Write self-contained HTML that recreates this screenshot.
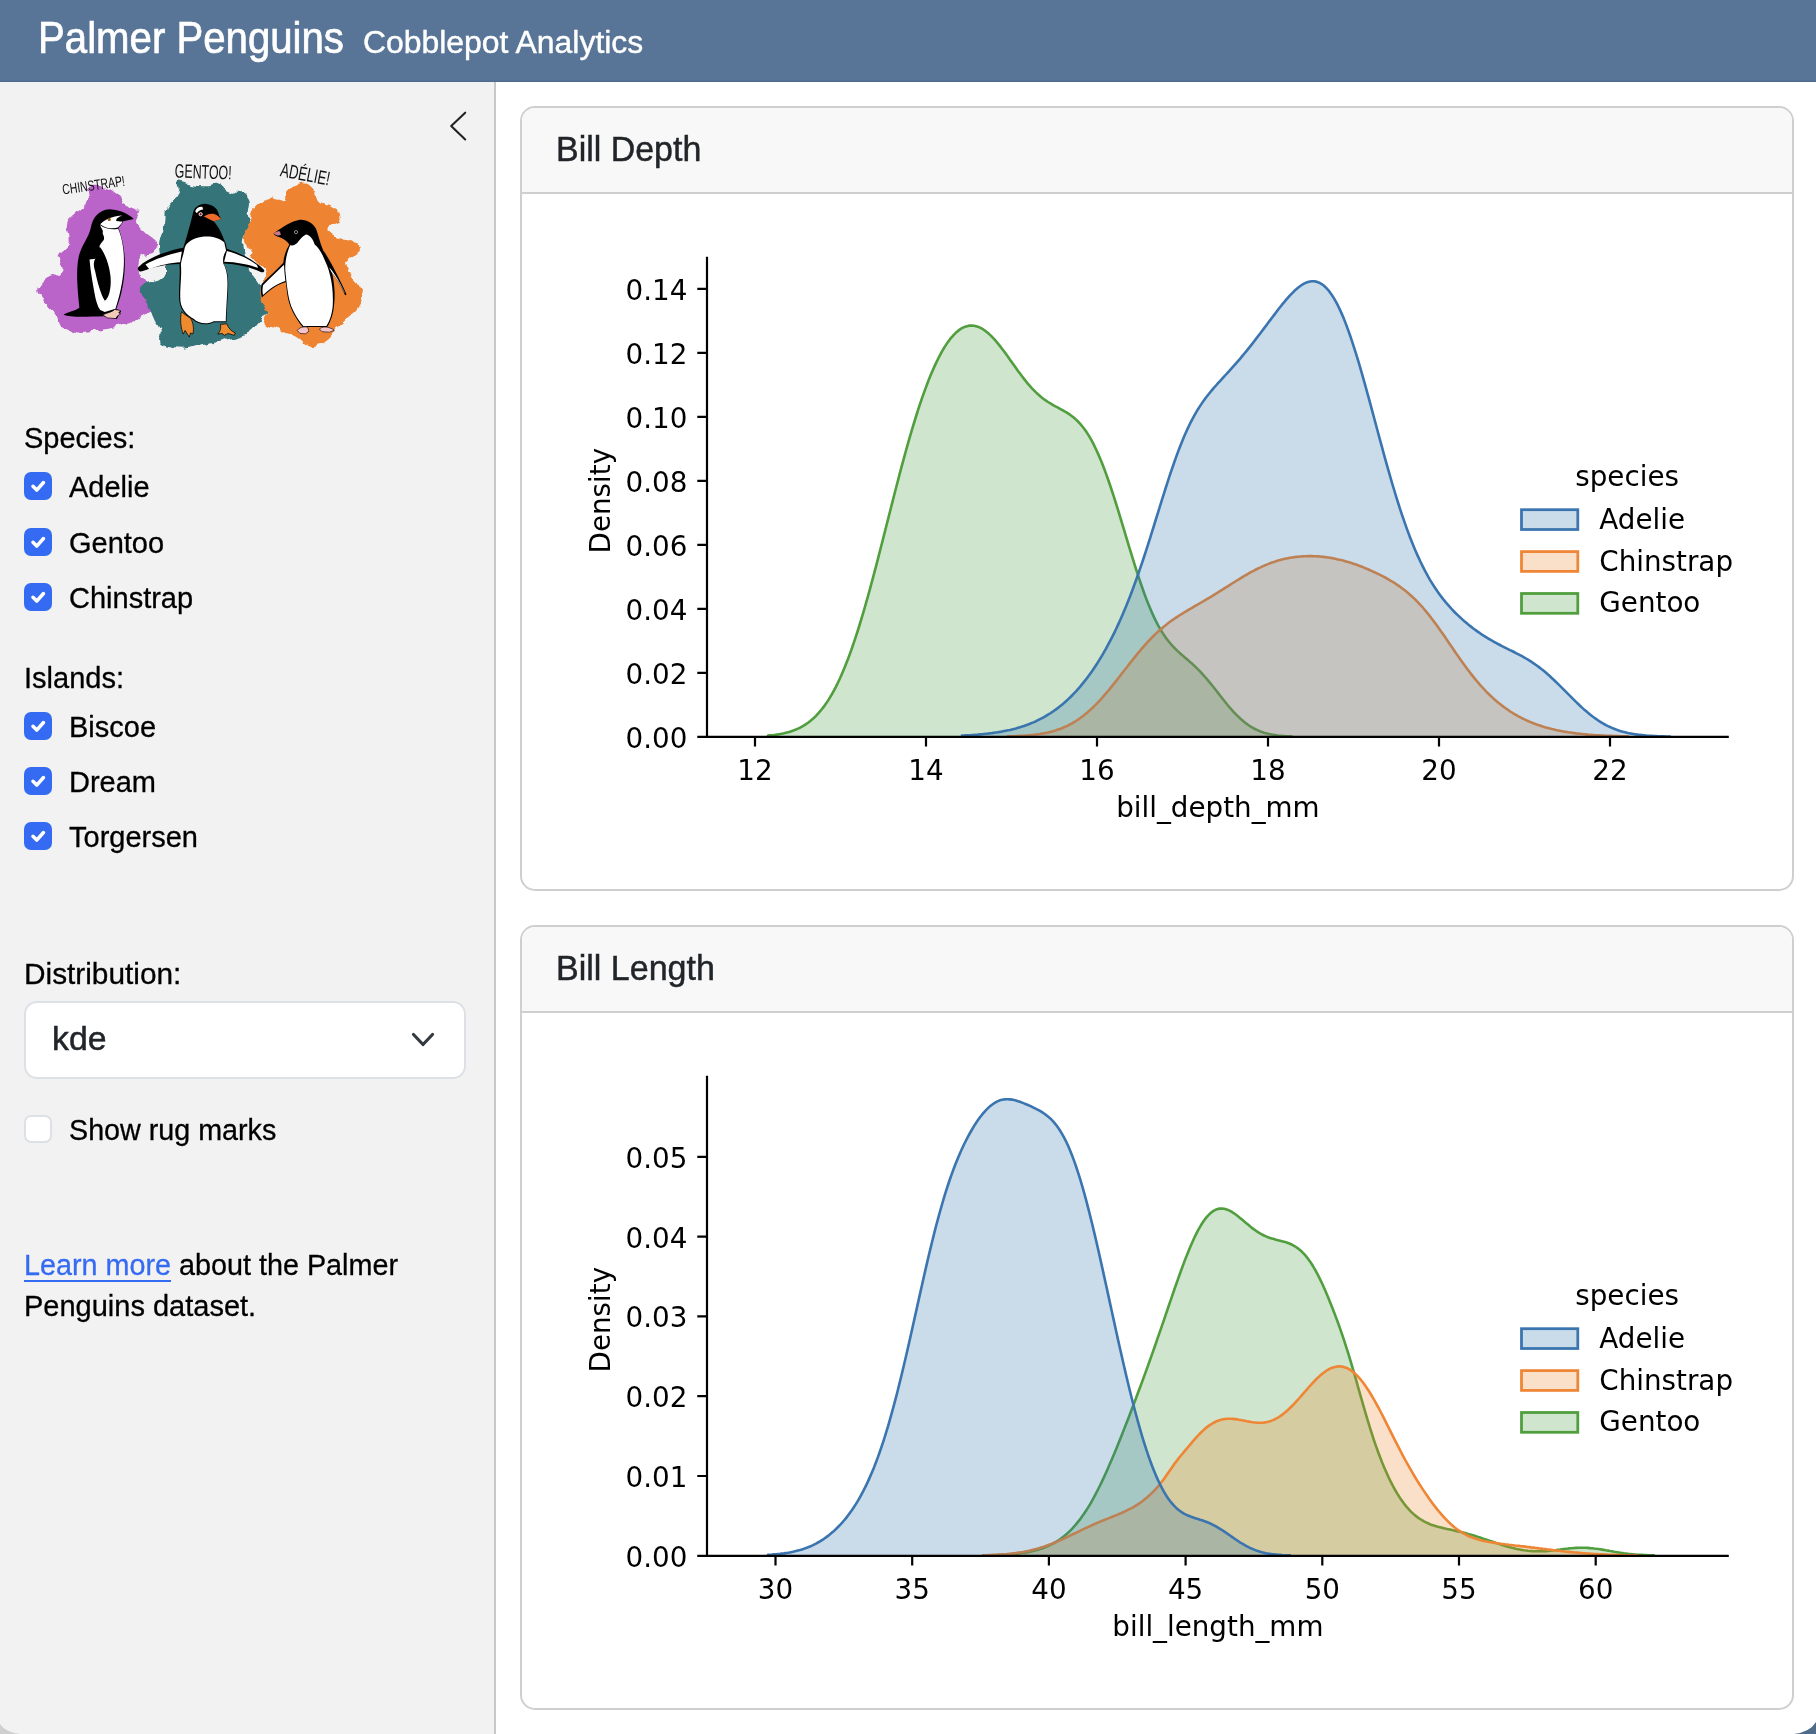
<!DOCTYPE html>
<html lang="en"><head><meta charset="utf-8"><title>Palmer Penguins</title>
<style>
html,body{margin:0;padding:0}
body{width:1816px;height:1734px;position:relative;overflow:hidden;background:#fff;font-family:"Liberation Sans",Arial,sans-serif}
.t{position:absolute;white-space:nowrap;-webkit-text-stroke:0.3px currentColor;transform:translateZ(0)}
header{position:absolute;left:0;top:0;width:1816px;height:82px;background:#587597;box-shadow:inset 0 -1.5px 0 #4f6b90}
aside{position:absolute;left:0;top:82px;width:494px;height:1652px;background:#f2f2f2;border-right:2px solid #c8c8c8}
.cb{position:absolute;left:24px;width:28px;height:28px;border-radius:7px;box-sizing:border-box;background:#fff;border:2px solid #dde1e6}
.cb.on{background:#356af2;border:none}
.cb svg{display:block}
.card{position:absolute;left:520px;width:1274px;height:785px;box-sizing:border-box;border:2px solid #cfcfcf;border-radius:15px;background:#fff;overflow:hidden}
.card .hd{height:84px;background:#f8f8f8;border-bottom:2px solid #cfcfcf}
.sel{position:absolute;left:24px;top:1001px;width:442px;height:78px;box-sizing:border-box;border:2px solid #dde1e6;border-radius:13px;background:#fff}
a{color:#356af2;text-decoration:underline;text-decoration-thickness:2px;text-underline-offset:5px}
svg{transform:translateZ(0)}
svg text{font-family:"DejaVu Sans",sans-serif;font-size:27.78px;fill:#000}
</style></head><body>

<header></header>
<div class="t " style="left:38px;top:11.3px;font-size:44.3px;line-height:53.16px;color:#fff;-webkit-text-stroke:0.7px #fff;transform:translateZ(0) scaleX(0.907);transform-origin:0 50%;">Palmer Penguins</div>
<div class="t " style="left:362.5px;top:23.8px;font-size:30.6px;line-height:36.72px;color:#fff;-webkit-text-stroke:0.4px #fff;transform:translateZ(0) scaleX(1.043);transform-origin:0 50%;">Cobblepot Analytics</div>
<aside></aside>
<svg style="position:absolute;left:440px;top:102px" width="40" height="48" viewBox="440 102 40 48"><path d="M465.2 112.7 L451.2 126 L465.2 139.4" fill="none" stroke="#222" stroke-width="2.1" stroke-linecap="round" stroke-linejoin="round"/></svg>
<svg style="position:absolute;left:20px;top:150px" width="380" height="210" viewBox="20 150 380 210">
<defs><filter id="rough" x="-10%" y="-10%" width="120%" height="120%"><feTurbulence type="fractalNoise" baseFrequency="0.09" numOctaves="2" seed="4" result="n"/><feDisplacementMap in="SourceGraphic" in2="n" scale="9" xChannelSelector="R" yChannelSelector="G"/></filter></defs>
<g filter="url(#rough)">
<path d="M87.8,188.8 C90.7,186.5 99.9,186.5 104.8,187.5 C109.6,188.6 112.9,191.8 116.9,194.8 C120.9,197.8 125.4,202.7 129.0,205.7 C132.6,208.7 137.5,210.2 138.7,213.0 C139.9,215.8 134.9,219.0 136.3,222.7 C137.7,226.3 143.7,231.6 147.2,234.8 C150.6,238.0 155.9,239.2 156.9,242.1 C157.9,244.9 155.9,249.3 153.2,251.7 C150.6,254.2 143.5,253.4 141.1,256.6 C138.7,259.8 137.7,266.3 138.7,271.1 C139.7,276.0 144.4,279.8 147.2,285.7 C150.0,291.5 155.7,301.6 155.7,306.2 C155.7,310.9 151.6,310.7 147.2,313.5 C142.7,316.3 136.1,320.6 129.0,323.2 C121.9,325.8 112.9,327.6 104.8,329.3 C96.7,330.9 87.8,333.5 80.6,332.9 C73.3,332.3 65.0,328.7 61.2,325.6 C57.3,322.6 60.4,319.0 57.5,314.7 C54.7,310.5 47.5,304.4 44.2,300.2 C41.0,296.0 37.8,292.9 38.2,289.3 C38.6,285.7 42.8,281.4 46.6,278.4 C50.5,275.4 59.2,274.8 61.2,271.1 C63.2,267.5 57.5,261.0 58.8,256.6 C60.0,252.1 67.0,250.1 68.4,244.5 C69.9,238.8 65.6,228.3 67.2,222.7 C68.9,217.0 74.7,214.2 78.1,210.6 C81.6,206.9 86.2,204.5 87.8,200.9 C89.4,197.2 85.0,191.0 87.8,188.8 Z" fill="#ba64c9"/>
<path d="M178.4,181.5 C180.9,180.7 188.1,184.3 193.0,185.1 C197.8,185.9 203.5,186.5 207.5,186.3 C211.6,186.1 214.0,183.3 217.2,183.9 C220.4,184.5 223.9,188.6 226.9,190.0 C229.9,191.4 232.3,191.8 235.4,192.4 C238.4,193.0 242.6,192.2 245.1,193.6 C247.5,195.0 249.3,197.6 249.9,200.9 C250.5,204.1 248.7,208.5 248.7,213.0 C248.7,217.4 250.7,223.5 249.9,227.5 C249.1,231.6 245.1,234.0 243.9,237.2 C242.6,240.4 242.2,243.3 242.6,246.9 C243.0,250.5 244.9,254.8 246.3,259.0 C247.7,263.3 249.1,268.3 251.1,272.3 C253.1,276.4 256.0,279.4 258.4,283.2 C260.8,287.1 264.0,291.3 265.7,295.3 C267.3,299.4 268.7,303.4 268.1,307.5 C267.5,311.5 264.9,315.5 262.0,319.6 C259.2,323.6 255.4,328.9 251.1,331.7 C246.9,334.5 242.6,334.7 236.6,336.5 C230.5,338.3 221.4,341.0 214.8,342.6 C208.1,344.2 202.7,345.2 196.6,346.2 C190.6,347.2 184.3,349.0 178.4,348.6 C172.6,348.2 164.5,346.6 161.5,343.8 C158.5,341.0 161.5,335.7 160.3,331.7 C159.1,327.6 156.2,324.0 154.2,319.6 C152.2,315.1 150.4,309.9 148.2,305.0 C145.9,300.2 141.3,294.1 140.9,290.5 C140.5,286.9 142.7,285.3 145.7,283.2 C148.8,281.2 155.6,280.4 159.1,278.4 C162.5,276.4 165.9,274.4 166.3,271.1 C166.7,267.9 162.7,263.0 161.5,259.0 C160.3,255.0 159.3,250.5 159.1,246.9 C158.9,243.3 159.3,241.2 160.3,237.2 C161.3,233.2 164.1,227.5 165.1,222.7 C166.1,217.8 164.9,212.2 166.3,208.1 C167.8,204.1 171.6,201.5 173.6,198.4 C175.6,195.4 177.6,192.8 178.4,190.0 C179.3,187.1 176.0,182.3 178.4,181.5 Z" fill="#36757a"/>
<path d="M297.8,185.1 C301.1,183.9 304.7,182.9 307.5,183.9 C310.3,184.9 312.8,188.2 314.8,191.2 C316.8,194.2 317.2,199.5 319.6,202.1 C322.1,204.7 326.3,205.5 329.3,206.9 C332.3,208.3 336.2,208.3 337.8,210.6 C339.4,212.8 340.2,217.2 339.0,220.3 C337.8,223.3 331.1,225.9 330.5,228.7 C329.9,231.6 331.9,235.4 335.4,237.2 C338.8,239.0 347.3,238.0 351.1,239.6 C355.0,241.2 357.4,244.5 358.4,246.9 C359.4,249.3 359.2,251.7 357.2,254.2 C355.2,256.6 347.3,257.8 346.3,261.4 C345.3,265.1 348.9,271.3 351.1,276.0 C353.3,280.6 357.8,285.5 359.6,289.3 C361.4,293.1 362.6,295.3 362.0,299.0 C361.4,302.6 358.6,307.7 356.0,311.1 C353.3,314.5 349.5,316.7 346.3,319.6 C343.0,322.4 339.8,324.8 336.6,328.1 C333.4,331.3 330.5,335.9 326.9,339.0 C323.3,342.0 318.4,345.4 314.8,346.2 C311.2,347.0 308.3,345.4 305.1,343.8 C301.9,342.2 299.0,338.5 295.4,336.5 C291.8,334.5 287.5,333.3 283.3,331.7 C279.1,330.1 273.2,328.5 270.0,326.8 C266.7,325.2 264.5,324.6 263.9,322.0 C263.3,319.4 266.7,315.1 266.3,311.1 C265.9,307.1 262.1,302.4 261.5,297.8 C260.9,293.1 262.1,287.7 262.7,283.2 C263.3,278.8 266.5,275.2 265.1,271.1 C263.7,267.1 257.3,263.0 254.2,259.0 C251.2,255.0 248.6,250.9 247.0,246.9 C245.3,242.9 243.9,238.8 244.5,234.8 C245.1,230.7 249.2,226.7 250.6,222.7 C252.0,218.6 251.2,214.0 253.0,210.6 C254.8,207.1 258.3,204.1 261.5,202.1 C264.7,200.1 268.8,198.7 272.4,198.4 C276.0,198.2 280.7,202.1 283.3,200.9 C285.9,199.7 285.7,193.8 288.1,191.2 C290.6,188.6 294.6,186.3 297.8,185.1 Z" fill="#ee8433"/>
</g>
<g transform="translate(20,150) scale(0.12112)" stroke-linejoin="round">
<path d="M940 570 C900 535 840 495 740 490 C650 495 600 560 585 640 C570 720 510 780 485 880 C460 1000 475 1150 490 1300 C450 1335 390 1335 360 1360 C420 1385 560 1375 690 1372 L800 1395 L835 1330 L795 1312 C840 1200 870 1050 865 900 C860 780 830 690 812 645 C835 620 850 600 852 588 Z" fill="#000"/>
<path d="M845 540 C780 540 700 570 662 612 C700 645 770 655 808 640 C828 620 842 602 848 592 L795 586 C790 566 815 550 845 540 Z" fill="#fff"/>
<path d="M662 622 C700 652 770 662 810 650 C848 735 863 850 857 960 C850 1100 815 1230 788 1310 L700 1338 L662 1322 C640 1290 625 1240 615 1180 C600 1100 582 1000 574 905 C590 900 620 900 645 895 C690 870 660 830 658 805 C650 785 690 750 692 742 C702 722 682 692 682 688 C694 662 664 640 662 622 Z" fill="#fff"/>
<path d="M660 800 C700 850 740 950 748 1050 C755 1150 730 1230 700 1245 C670 1200 640 1100 620 1000 C600 940 610 900 640 880 C650 850 650 820 660 800 Z" fill="#000"/>
<circle cx="737" cy="573" r="13" fill="#8a5a14"/>
<path d="M682 1362 C720 1342 760 1340 782 1316 L830 1326 L815 1346 L832 1352 L802 1372 L792 1392 L722 1386 Z" fill="#f3cbb9" stroke="#000" stroke-width="5"/>
</g>
<g transform="translate(230,150) scale(0.12112)" stroke-linejoin="round">
<path d="M360 690 C400 660 480 600 560 580 C620 565 680 600 710 650 C730 700 740 760 770 830 C820 900 900 1050 962 1192 L950 1200 C920 1130 880 1060 842 1012 C862 1100 872 1200 857 1300 C847 1380 822 1432 802 1462 L600 1462 C550 1400 500 1320 480 1230 C470 1180 465 1130 462 1092 C400 1102 320 1162 263 1218 C253 1180 253 1140 260 1108 C320 1050 390 980 440 930 C445 880 460 830 490 780 C470 750 440 730 410 720 C385 715 365 705 360 690 Z" fill="#000"/>
<path d="M560 762 C580 732 610 702 632 697 C660 702 690 742 700 782 C730 802 760 852 788 922 C828 1002 858 1150 848 1290 C840 1370 816 1425 796 1453 L605 1453 C557 1396 507 1316 488 1230 C472 1150 462 1050 457 1000 C452 920 472 842 497 787 C522 792 545 782 560 762 Z" fill="#fff"/>
<path d="M446 948 C396 998 326 1062 273 1117 C267 1147 267 1175 273 1198 C320 1150 400 1096 457 1081 C451 1036 448 992 446 948 Z" fill="#fff"/>
<path d="M818 968 C852 1003 902 1082 944 1170 L948 1184 C915 1115 875 1050 836 1006 Z" fill="#fff"/>
<circle cx="545" cy="678" r="13" fill="#000" stroke="#ddd" stroke-width="5"/>
<path d="M362 690 C372 676 392 668 412 672 L420 700 C400 712 378 706 362 690 Z" fill="#c9788a"/>
<path d="M555 1490 C570 1466 600 1456 640 1462 L652 1496 L622 1518 L578 1514 Z" fill="#f7c3c8" stroke="#000" stroke-width="5"/>
<path d="M738 1478 C760 1458 800 1456 842 1476 L862 1488 L822 1504 L760 1500 Z" fill="#f7c3c8" stroke="#000" stroke-width="5"/>
</g>
<g transform="translate(130,150) scale(0.12112)" stroke-linejoin="round">
<path d="M520 520 C530 470 580 440 630 445 C690 450 730 490 735 540 L755 570 L690 588 C740 640 760 700 790 770 L800 815 C900 850 1020 900 1108 990 C1113 1007 1097 1012 1080 1007 C980 962 880 942 772 937 C812 1000 817 1100 807 1200 C802 1300 797 1380 797 1422 L690 1422 C640 1452 560 1442 520 1402 C470 1372 418 1330 408 1250 C398 1150 418 1050 408 942 C300 942 180 972 100 1002 C73 1007 58 990 68 968 C160 880 330 828 440 808 C460 740 490 650 520 520 Z" fill="#000"/>
<path d="M472 772 C540 702 700 692 778 762 L793 830 C770 870 765 900 770 937 C808 1000 810 1100 801 1200 C796 1300 791 1380 791 1413 L690 1413 C640 1443 562 1433 525 1394 C477 1364 427 1326 417 1250 C407 1150 430 1050 420 942 C427 900 442 860 447 830 C452 800 462 782 472 772 Z" fill="#fff"/>
<path d="M428 838 C320 862 200 902 128 946 C140 960 150 974 160 984 C240 950 340 930 414 926 Z" fill="#fff"/>
<path d="M800 834 C900 862 990 902 1048 950 L1058 974 C980 945 880 926 777 923 Z" fill="#fff"/>
<path d="M610 550 C640 525 690 515 720 540 L755 570 L690 588 C660 575 630 560 610 550 Z" fill="#ef6a2a"/>
<path d="M538 505 C548 478 575 466 598 470 L604 492 C585 494 566 502 552 522 Z" fill="#fff"/>
<circle cx="583" cy="530" r="13" fill="#b22" stroke="#fff" stroke-width="7"/><circle cx="583" cy="530" r="5" fill="#311"/>
<path d="M425 1335 C410 1400 420 1470 440 1520 L455 1490 L490 1545 L500 1510 L520 1520 C530 1470 520 1420 500 1390 C470 1370 440 1350 425 1335 Z" fill="#f08a2e" stroke="#000" stroke-width="6"/>
<path d="M745 1440 L800 1435 C810 1470 840 1500 870 1510 L860 1530 L810 1515 L780 1530 L760 1515 L725 1520 C745 1495 755 1470 745 1440 Z" fill="#f08a2e" stroke="#000" stroke-width="6"/>
</g>
<text transform="translate(63,194.5) rotate(-8)" textLength="63" lengthAdjust="spacingAndGlyphs" style="font-family:&quot;Liberation Sans&quot;,sans-serif;fill:#111;font-size:14.5px">CHINSTRAP!</text>
<text transform="translate(174.5,177.5) rotate(2)" textLength="57" lengthAdjust="spacingAndGlyphs" style="font-family:&quot;Liberation Sans&quot;,sans-serif;fill:#111;font-size:19.5px">GENTOO!</text>
<text transform="translate(279.5,176) rotate(11)" textLength="50" lengthAdjust="spacingAndGlyphs" style="font-family:&quot;Liberation Sans&quot;,sans-serif;fill:#111;font-size:19.5px">ADÉLIE!</text>
</svg>
<div class="t " style="left:24px;top:421.0px;font-size:29px;line-height:34.8px;color:#000;">Species:</div>
<div class="cb on" style="top:472px"><svg viewBox="0 0 20 20" width="28" height="28"><path d="M6.4 10.2l2.7 2.7 4.8-5.4" fill="none" stroke="#fff" stroke-width="2.5" stroke-linecap="round" stroke-linejoin="round"/></svg></div><div class="t " style="left:69px;top:470.2px;font-size:29px;line-height:34.8px;color:#000;">Adelie</div>
<div class="cb on" style="top:528px"><svg viewBox="0 0 20 20" width="28" height="28"><path d="M6.4 10.2l2.7 2.7 4.8-5.4" fill="none" stroke="#fff" stroke-width="2.5" stroke-linecap="round" stroke-linejoin="round"/></svg></div><div class="t " style="left:69px;top:526.2px;font-size:29px;line-height:34.8px;color:#000;">Gentoo</div>
<div class="cb on" style="top:583px"><svg viewBox="0 0 20 20" width="28" height="28"><path d="M6.4 10.2l2.7 2.7 4.8-5.4" fill="none" stroke="#fff" stroke-width="2.5" stroke-linecap="round" stroke-linejoin="round"/></svg></div><div class="t " style="left:69px;top:581.2px;font-size:29px;line-height:34.8px;color:#000;">Chinstrap</div>
<div class="t " style="left:24px;top:660.5px;font-size:29px;line-height:34.8px;color:#000;">Islands:</div>
<div class="cb on" style="top:712px"><svg viewBox="0 0 20 20" width="28" height="28"><path d="M6.4 10.2l2.7 2.7 4.8-5.4" fill="none" stroke="#fff" stroke-width="2.5" stroke-linecap="round" stroke-linejoin="round"/></svg></div><div class="t " style="left:69px;top:710.2px;font-size:29px;line-height:34.8px;color:#000;">Biscoe</div>
<div class="cb on" style="top:767px"><svg viewBox="0 0 20 20" width="28" height="28"><path d="M6.4 10.2l2.7 2.7 4.8-5.4" fill="none" stroke="#fff" stroke-width="2.5" stroke-linecap="round" stroke-linejoin="round"/></svg></div><div class="t " style="left:69px;top:765.2px;font-size:29px;line-height:34.8px;color:#000;">Dream</div>
<div class="cb on" style="top:822px"><svg viewBox="0 0 20 20" width="28" height="28"><path d="M6.4 10.2l2.7 2.7 4.8-5.4" fill="none" stroke="#fff" stroke-width="2.5" stroke-linecap="round" stroke-linejoin="round"/></svg></div><div class="t " style="left:69px;top:820.2px;font-size:29px;line-height:34.8px;color:#000;">Torgersen</div>
<div class="t " style="left:24px;top:955.5px;font-size:29.8px;line-height:35.76px;color:#000;">Distribution:</div>
<div class="sel"></div>
<div class="t " style="left:52px;top:1018.1px;font-size:33.8px;line-height:40.56px;color:#212529;-webkit-text-stroke:0.5px #212529;">kde</div>
<svg style="position:absolute;left:406px;top:1026px" width="34" height="28" viewBox="406 1026 34 28"><path d="M413.5 1034.5 L423 1044.5 L432.5 1034.5" fill="none" stroke="#343a40" stroke-width="3.2" stroke-linecap="round" stroke-linejoin="round"/></svg>
<div class="cb" style="top:1115px"></div>
<div class="t " style="left:69px;top:1112.9px;font-size:28.7px;line-height:34.44px;color:#000;">Show rug marks</div>
<div class="t " style="left:24px;top:1248.0px;font-size:28.75px;line-height:34.5px;color:#000;"><a>Learn more</a> about the Palmer</div>
<div class="t " style="left:24px;top:1289.4px;font-size:29px;line-height:34.8px;color:#000;">Penguins dataset.</div>
<div class="card" style="top:106px"><div class="hd"></div></div>
<div class="card" style="top:925px"><div class="hd"></div></div>
<div class="t " style="left:555.5px;top:128.5px;font-size:34.2px;line-height:41.04px;color:#212529;-webkit-text-stroke:0.45px #212529;transform:translateZ(0) scaleX(0.993);transform-origin:0 50%;">Bill Depth</div>
<div class="t " style="left:555.5px;top:947.5px;font-size:34.2px;line-height:41.04px;color:#212529;-webkit-text-stroke:0.45px #212529;transform:translateZ(0) scaleX(0.995);transform-origin:0 50%;">Bill Length</div>
<svg style="position:absolute;left:523px;top:195px" width="1268" height="692" viewBox="523 195 1268 692"><path d="M768.0,736.8 L768.0,735.6 770.0,735.4 772.0,735.2 774.0,735.0 776.0,734.7 778.0,734.4 780.0,734.1 782.0,733.7 784.0,733.3 786.0,732.8 788.0,732.3 790.0,731.7 792.0,731.0 794.0,730.3 796.0,729.5 798.0,728.6 800.0,727.7 802.0,726.6 804.0,725.4 806.0,724.1 808.0,722.7 810.0,721.2 812.0,719.6 814.0,717.8 816.0,715.8 818.0,713.7 820.0,711.4 822.0,709.0 824.0,706.4 826.0,703.6 828.0,700.6 830.0,697.4 832.0,694.0 834.0,690.4 836.0,686.6 838.0,682.5 840.0,678.3 842.0,673.8 844.0,669.1 846.0,664.1 848.0,659.0 850.0,653.6 852.0,648.0 854.0,642.2 856.0,636.2 858.0,630.0 860.0,623.5 862.0,616.9 864.0,610.1 866.0,603.2 868.0,596.1 870.0,588.8 872.0,581.4 874.0,573.9 876.0,566.3 878.0,558.6 880.0,550.8 882.0,543.0 884.0,535.1 886.0,527.3 888.0,519.4 890.0,511.5 892.0,503.6 894.0,495.8 896.0,488.0 898.0,480.3 900.0,472.7 902.0,465.2 904.0,457.8 906.0,450.5 908.0,443.4 910.0,436.4 912.0,429.6 914.0,423.0 916.0,416.5 918.0,410.2 920.0,404.1 922.0,398.2 924.0,392.6 926.0,387.1 928.0,381.8 930.0,376.8 932.0,372.0 934.0,367.4 936.0,363.1 938.0,359.0 940.0,355.1 942.0,351.4 944.0,348.0 946.0,344.9 948.0,341.9 950.0,339.2 952.0,336.8 954.0,334.6 956.0,332.6 958.0,330.9 960.0,329.4 962.0,328.2 964.0,327.2 966.0,326.4 968.0,325.9 970.0,325.6 972.0,325.6 974.0,325.8 976.0,326.2 978.0,326.8 980.0,327.6 982.0,328.7 984.0,330.0 986.0,331.4 988.0,333.0 990.0,334.9 992.0,336.8 994.0,338.9 996.0,341.2 998.0,343.6 1000.0,346.1 1002.0,348.7 1004.0,351.3 1006.0,354.1 1008.0,356.8 1010.0,359.7 1012.0,362.5 1014.0,365.3 1016.0,368.1 1018.0,370.9 1020.0,373.6 1022.0,376.3 1024.0,378.9 1026.0,381.4 1028.0,383.8 1030.0,386.1 1032.0,388.3 1034.0,390.4 1036.0,392.4 1038.0,394.3 1040.0,396.0 1042.0,397.7 1044.0,399.2 1046.0,400.6 1048.0,402.0 1050.0,403.2 1052.0,404.4 1054.0,405.6 1056.0,406.7 1058.0,407.7 1060.0,408.8 1062.0,409.9 1064.0,411.0 1066.0,412.2 1068.0,413.4 1070.0,414.7 1072.0,416.2 1074.0,417.8 1076.0,419.6 1078.0,421.5 1080.0,423.6 1082.0,426.0 1084.0,428.5 1086.0,431.3 1088.0,434.4 1090.0,437.7 1092.0,441.2 1094.0,445.1 1096.0,449.2 1098.0,453.6 1100.0,458.2 1102.0,463.1 1104.0,468.2 1106.0,473.6 1108.0,479.2 1110.0,485.0 1112.0,491.0 1114.0,497.2 1116.0,503.5 1118.0,509.9 1120.0,516.5 1122.0,523.1 1124.0,529.7 1126.0,536.4 1128.0,543.1 1130.0,549.7 1132.0,556.2 1134.0,562.7 1136.0,569.0 1138.0,575.2 1140.0,581.2 1142.0,587.0 1144.0,592.7 1146.0,598.1 1148.0,603.2 1150.0,608.1 1152.0,612.7 1154.0,617.1 1156.0,621.2 1158.0,625.1 1160.0,628.6 1162.0,632.0 1164.0,635.1 1166.0,637.9 1168.0,640.6 1170.0,643.0 1172.0,645.3 1174.0,647.5 1176.0,649.5 1178.0,651.4 1180.0,653.2 1182.0,654.9 1184.0,656.7 1186.0,658.4 1188.0,660.1 1190.0,661.9 1192.0,663.6 1194.0,665.5 1196.0,667.4 1198.0,669.4 1200.0,671.4 1202.0,673.5 1204.0,675.8 1206.0,678.0 1208.0,680.4 1210.0,682.8 1212.0,685.3 1214.0,687.8 1216.0,690.3 1218.0,692.9 1220.0,695.5 1222.0,698.0 1224.0,700.5 1226.0,703.0 1228.0,705.5 1230.0,707.8 1232.0,710.1 1234.0,712.3 1236.0,714.4 1238.0,716.4 1240.0,718.3 1242.0,720.1 1244.0,721.8 1246.0,723.4 1248.0,724.8 1250.0,726.2 1252.0,727.4 1254.0,728.5 1256.0,729.5 1258.0,730.4 1260.0,731.3 1262.0,732.0 1264.0,732.7 1266.0,733.2 1268.0,733.8 1270.0,734.2 1272.0,734.6 1274.0,734.9 1276.0,735.2 1278.0,735.5 1280.0,735.7 1282.0,735.9 1284.0,736.0 1286.0,736.2 1288.0,736.3 1290.0,736.4 1292.0,736.5 L1292.0,736.8 Z" fill="#3f9737" fill-opacity="0.25" stroke="none"/><path d="M768.0,736.8 L768.0,735.6 770.0,735.4 772.0,735.2 774.0,735.0 776.0,734.7 778.0,734.4 780.0,734.1 782.0,733.7 784.0,733.3 786.0,732.8 788.0,732.3 790.0,731.7 792.0,731.0 794.0,730.3 796.0,729.5 798.0,728.6 800.0,727.7 802.0,726.6 804.0,725.4 806.0,724.1 808.0,722.7 810.0,721.2 812.0,719.6 814.0,717.8 816.0,715.8 818.0,713.7 820.0,711.4 822.0,709.0 824.0,706.4 826.0,703.6 828.0,700.6 830.0,697.4 832.0,694.0 834.0,690.4 836.0,686.6 838.0,682.5 840.0,678.3 842.0,673.8 844.0,669.1 846.0,664.1 848.0,659.0 850.0,653.6 852.0,648.0 854.0,642.2 856.0,636.2 858.0,630.0 860.0,623.5 862.0,616.9 864.0,610.1 866.0,603.2 868.0,596.1 870.0,588.8 872.0,581.4 874.0,573.9 876.0,566.3 878.0,558.6 880.0,550.8 882.0,543.0 884.0,535.1 886.0,527.3 888.0,519.4 890.0,511.5 892.0,503.6 894.0,495.8 896.0,488.0 898.0,480.3 900.0,472.7 902.0,465.2 904.0,457.8 906.0,450.5 908.0,443.4 910.0,436.4 912.0,429.6 914.0,423.0 916.0,416.5 918.0,410.2 920.0,404.1 922.0,398.2 924.0,392.6 926.0,387.1 928.0,381.8 930.0,376.8 932.0,372.0 934.0,367.4 936.0,363.1 938.0,359.0 940.0,355.1 942.0,351.4 944.0,348.0 946.0,344.9 948.0,341.9 950.0,339.2 952.0,336.8 954.0,334.6 956.0,332.6 958.0,330.9 960.0,329.4 962.0,328.2 964.0,327.2 966.0,326.4 968.0,325.9 970.0,325.6 972.0,325.6 974.0,325.8 976.0,326.2 978.0,326.8 980.0,327.6 982.0,328.7 984.0,330.0 986.0,331.4 988.0,333.0 990.0,334.9 992.0,336.8 994.0,338.9 996.0,341.2 998.0,343.6 1000.0,346.1 1002.0,348.7 1004.0,351.3 1006.0,354.1 1008.0,356.8 1010.0,359.7 1012.0,362.5 1014.0,365.3 1016.0,368.1 1018.0,370.9 1020.0,373.6 1022.0,376.3 1024.0,378.9 1026.0,381.4 1028.0,383.8 1030.0,386.1 1032.0,388.3 1034.0,390.4 1036.0,392.4 1038.0,394.3 1040.0,396.0 1042.0,397.7 1044.0,399.2 1046.0,400.6 1048.0,402.0 1050.0,403.2 1052.0,404.4 1054.0,405.6 1056.0,406.7 1058.0,407.7 1060.0,408.8 1062.0,409.9 1064.0,411.0 1066.0,412.2 1068.0,413.4 1070.0,414.7 1072.0,416.2 1074.0,417.8 1076.0,419.6 1078.0,421.5 1080.0,423.6 1082.0,426.0 1084.0,428.5 1086.0,431.3 1088.0,434.4 1090.0,437.7 1092.0,441.2 1094.0,445.1 1096.0,449.2 1098.0,453.6 1100.0,458.2 1102.0,463.1 1104.0,468.2 1106.0,473.6 1108.0,479.2 1110.0,485.0 1112.0,491.0 1114.0,497.2 1116.0,503.5 1118.0,509.9 1120.0,516.5 1122.0,523.1 1124.0,529.7 1126.0,536.4 1128.0,543.1 1130.0,549.7 1132.0,556.2 1134.0,562.7 1136.0,569.0 1138.0,575.2 1140.0,581.2 1142.0,587.0 1144.0,592.7 1146.0,598.1 1148.0,603.2 1150.0,608.1 1152.0,612.7 1154.0,617.1 1156.0,621.2 1158.0,625.1 1160.0,628.6 1162.0,632.0 1164.0,635.1 1166.0,637.9 1168.0,640.6 1170.0,643.0 1172.0,645.3 1174.0,647.5 1176.0,649.5 1178.0,651.4 1180.0,653.2 1182.0,654.9 1184.0,656.7 1186.0,658.4 1188.0,660.1 1190.0,661.9 1192.0,663.6 1194.0,665.5 1196.0,667.4 1198.0,669.4 1200.0,671.4 1202.0,673.5 1204.0,675.8 1206.0,678.0 1208.0,680.4 1210.0,682.8 1212.0,685.3 1214.0,687.8 1216.0,690.3 1218.0,692.9 1220.0,695.5 1222.0,698.0 1224.0,700.5 1226.0,703.0 1228.0,705.5 1230.0,707.8 1232.0,710.1 1234.0,712.3 1236.0,714.4 1238.0,716.4 1240.0,718.3 1242.0,720.1 1244.0,721.8 1246.0,723.4 1248.0,724.8 1250.0,726.2 1252.0,727.4 1254.0,728.5 1256.0,729.5 1258.0,730.4 1260.0,731.3 1262.0,732.0 1264.0,732.7 1266.0,733.2 1268.0,733.8 1270.0,734.2 1272.0,734.6 1274.0,734.9 1276.0,735.2 1278.0,735.5 1280.0,735.7 1282.0,735.9 1284.0,736.0 1286.0,736.2 1288.0,736.3 1290.0,736.4 1292.0,736.5 L1292.0,736.8" fill="none" stroke="#519e3e" stroke-width="2.6" stroke-linejoin="round"/>
<path d="M1008.0,736.8 L1008.0,736.4 1010.0,736.3 1012.0,736.3 1014.0,736.2 1016.0,736.1 1018.0,736.0 1020.0,735.9 1022.0,735.8 1024.0,735.7 1026.0,735.5 1028.0,735.4 1030.0,735.2 1032.0,735.0 1034.0,734.8 1036.0,734.5 1038.0,734.3 1040.0,734.0 1042.0,733.6 1044.0,733.3 1046.0,732.9 1048.0,732.5 1050.0,732.0 1052.0,731.5 1054.0,730.9 1056.0,730.3 1058.0,729.6 1060.0,728.9 1062.0,728.2 1064.0,727.3 1066.0,726.4 1068.0,725.5 1070.0,724.4 1072.0,723.4 1074.0,722.2 1076.0,721.0 1078.0,719.6 1080.0,718.2 1082.0,716.8 1084.0,715.2 1086.0,713.6 1088.0,711.9 1090.0,710.1 1092.0,708.3 1094.0,706.4 1096.0,704.4 1098.0,702.3 1100.0,700.2 1102.0,698.0 1104.0,695.7 1106.0,693.4 1108.0,691.0 1110.0,688.6 1112.0,686.1 1114.0,683.6 1116.0,681.1 1118.0,678.5 1120.0,676.0 1122.0,673.4 1124.0,670.8 1126.0,668.2 1128.0,665.7 1130.0,663.1 1132.0,660.6 1134.0,658.1 1136.0,655.6 1138.0,653.1 1140.0,650.8 1142.0,648.4 1144.0,646.1 1146.0,643.9 1148.0,641.7 1150.0,639.6 1152.0,637.5 1154.0,635.5 1156.0,633.6 1158.0,631.7 1160.0,629.9 1162.0,628.2 1164.0,626.5 1166.0,624.9 1168.0,623.3 1170.0,621.8 1172.0,620.4 1174.0,619.0 1176.0,617.6 1178.0,616.3 1180.0,615.0 1182.0,613.8 1184.0,612.5 1186.0,611.3 1188.0,610.1 1190.0,609.0 1192.0,607.8 1194.0,606.6 1196.0,605.5 1198.0,604.3 1200.0,603.2 1202.0,602.0 1204.0,600.8 1206.0,599.6 1208.0,598.5 1210.0,597.3 1212.0,596.1 1214.0,594.8 1216.0,593.6 1218.0,592.4 1220.0,591.1 1222.0,589.9 1224.0,588.6 1226.0,587.3 1228.0,586.1 1230.0,584.8 1232.0,583.5 1234.0,582.3 1236.0,581.0 1238.0,579.8 1240.0,578.6 1242.0,577.4 1244.0,576.2 1246.0,575.0 1248.0,573.9 1250.0,572.7 1252.0,571.6 1254.0,570.6 1256.0,569.5 1258.0,568.5 1260.0,567.6 1262.0,566.6 1264.0,565.8 1266.0,564.9 1268.0,564.1 1270.0,563.3 1272.0,562.6 1274.0,561.9 1276.0,561.2 1278.0,560.6 1280.0,560.1 1282.0,559.5 1284.0,559.0 1286.0,558.6 1288.0,558.2 1290.0,557.8 1292.0,557.5 1294.0,557.2 1296.0,556.9 1298.0,556.7 1300.0,556.5 1302.0,556.4 1304.0,556.2 1306.0,556.2 1308.0,556.1 1310.0,556.1 1312.0,556.1 1314.0,556.2 1316.0,556.3 1318.0,556.4 1320.0,556.5 1322.0,556.7 1324.0,556.9 1326.0,557.2 1328.0,557.5 1330.0,557.8 1332.0,558.1 1334.0,558.5 1336.0,558.9 1338.0,559.4 1340.0,559.8 1342.0,560.3 1344.0,560.8 1346.0,561.4 1348.0,562.0 1350.0,562.6 1352.0,563.2 1354.0,563.9 1356.0,564.6 1358.0,565.3 1360.0,566.1 1362.0,566.8 1364.0,567.6 1366.0,568.5 1368.0,569.3 1370.0,570.2 1372.0,571.1 1374.0,572.0 1376.0,572.9 1378.0,573.9 1380.0,574.9 1382.0,575.9 1384.0,576.9 1386.0,578.0 1388.0,579.1 1390.0,580.3 1392.0,581.5 1394.0,582.7 1396.0,584.0 1398.0,585.4 1400.0,586.7 1402.0,588.2 1404.0,589.7 1406.0,591.3 1408.0,593.0 1410.0,594.7 1412.0,596.5 1414.0,598.4 1416.0,600.3 1418.0,602.4 1420.0,604.5 1422.0,606.7 1424.0,609.0 1426.0,611.4 1428.0,613.8 1430.0,616.4 1432.0,619.0 1434.0,621.6 1436.0,624.3 1438.0,627.1 1440.0,629.9 1442.0,632.7 1444.0,635.6 1446.0,638.5 1448.0,641.5 1450.0,644.4 1452.0,647.3 1454.0,650.2 1456.0,653.2 1458.0,656.0 1460.0,658.9 1462.0,661.7 1464.0,664.5 1466.0,667.2 1468.0,669.9 1470.0,672.6 1472.0,675.1 1474.0,677.6 1476.0,680.1 1478.0,682.4 1480.0,684.8 1482.0,687.0 1484.0,689.2 1486.0,691.3 1488.0,693.3 1490.0,695.2 1492.0,697.1 1494.0,699.0 1496.0,700.7 1498.0,702.4 1500.0,704.0 1502.0,705.6 1504.0,707.1 1506.0,708.5 1508.0,709.9 1510.0,711.3 1512.0,712.5 1514.0,713.8 1516.0,714.9 1518.0,716.1 1520.0,717.1 1522.0,718.2 1524.0,719.1 1526.0,720.1 1528.0,721.0 1530.0,721.9 1532.0,722.7 1534.0,723.5 1536.0,724.2 1538.0,724.9 1540.0,725.6 1542.0,726.3 1544.0,726.9 1546.0,727.5 1548.0,728.0 1550.0,728.6 1552.0,729.1 1554.0,729.5 1556.0,730.0 1558.0,730.4 1560.0,730.8 1562.0,731.2 1564.0,731.6 1566.0,731.9 1568.0,732.2 1570.0,732.5 1572.0,732.8 1574.0,733.1 1576.0,733.4 1578.0,733.6 1580.0,733.8 1582.0,734.0 1584.0,734.2 1586.0,734.4 1588.0,734.6 1590.0,734.7 1592.0,734.9 1594.0,735.0 1596.0,735.2 1598.0,735.3 1600.0,735.4 1602.0,735.5 1604.0,735.6 1606.0,735.7 1608.0,735.8 1610.0,735.9 1612.0,735.9 1614.0,736.0 1616.0,736.1 1618.0,736.1 1620.0,736.2 1622.0,736.2 1624.0,736.3 1626.0,736.3 1628.0,736.4 L1628.0,736.8 Z" fill="#eb8323" fill-opacity="0.25" stroke="none"/><path d="M1008.0,736.8 L1008.0,736.4 1010.0,736.3 1012.0,736.3 1014.0,736.2 1016.0,736.1 1018.0,736.0 1020.0,735.9 1022.0,735.8 1024.0,735.7 1026.0,735.5 1028.0,735.4 1030.0,735.2 1032.0,735.0 1034.0,734.8 1036.0,734.5 1038.0,734.3 1040.0,734.0 1042.0,733.6 1044.0,733.3 1046.0,732.9 1048.0,732.5 1050.0,732.0 1052.0,731.5 1054.0,730.9 1056.0,730.3 1058.0,729.6 1060.0,728.9 1062.0,728.2 1064.0,727.3 1066.0,726.4 1068.0,725.5 1070.0,724.4 1072.0,723.4 1074.0,722.2 1076.0,721.0 1078.0,719.6 1080.0,718.2 1082.0,716.8 1084.0,715.2 1086.0,713.6 1088.0,711.9 1090.0,710.1 1092.0,708.3 1094.0,706.4 1096.0,704.4 1098.0,702.3 1100.0,700.2 1102.0,698.0 1104.0,695.7 1106.0,693.4 1108.0,691.0 1110.0,688.6 1112.0,686.1 1114.0,683.6 1116.0,681.1 1118.0,678.5 1120.0,676.0 1122.0,673.4 1124.0,670.8 1126.0,668.2 1128.0,665.7 1130.0,663.1 1132.0,660.6 1134.0,658.1 1136.0,655.6 1138.0,653.1 1140.0,650.8 1142.0,648.4 1144.0,646.1 1146.0,643.9 1148.0,641.7 1150.0,639.6 1152.0,637.5 1154.0,635.5 1156.0,633.6 1158.0,631.7 1160.0,629.9 1162.0,628.2 1164.0,626.5 1166.0,624.9 1168.0,623.3 1170.0,621.8 1172.0,620.4 1174.0,619.0 1176.0,617.6 1178.0,616.3 1180.0,615.0 1182.0,613.8 1184.0,612.5 1186.0,611.3 1188.0,610.1 1190.0,609.0 1192.0,607.8 1194.0,606.6 1196.0,605.5 1198.0,604.3 1200.0,603.2 1202.0,602.0 1204.0,600.8 1206.0,599.6 1208.0,598.5 1210.0,597.3 1212.0,596.1 1214.0,594.8 1216.0,593.6 1218.0,592.4 1220.0,591.1 1222.0,589.9 1224.0,588.6 1226.0,587.3 1228.0,586.1 1230.0,584.8 1232.0,583.5 1234.0,582.3 1236.0,581.0 1238.0,579.8 1240.0,578.6 1242.0,577.4 1244.0,576.2 1246.0,575.0 1248.0,573.9 1250.0,572.7 1252.0,571.6 1254.0,570.6 1256.0,569.5 1258.0,568.5 1260.0,567.6 1262.0,566.6 1264.0,565.8 1266.0,564.9 1268.0,564.1 1270.0,563.3 1272.0,562.6 1274.0,561.9 1276.0,561.2 1278.0,560.6 1280.0,560.1 1282.0,559.5 1284.0,559.0 1286.0,558.6 1288.0,558.2 1290.0,557.8 1292.0,557.5 1294.0,557.2 1296.0,556.9 1298.0,556.7 1300.0,556.5 1302.0,556.4 1304.0,556.2 1306.0,556.2 1308.0,556.1 1310.0,556.1 1312.0,556.1 1314.0,556.2 1316.0,556.3 1318.0,556.4 1320.0,556.5 1322.0,556.7 1324.0,556.9 1326.0,557.2 1328.0,557.5 1330.0,557.8 1332.0,558.1 1334.0,558.5 1336.0,558.9 1338.0,559.4 1340.0,559.8 1342.0,560.3 1344.0,560.8 1346.0,561.4 1348.0,562.0 1350.0,562.6 1352.0,563.2 1354.0,563.9 1356.0,564.6 1358.0,565.3 1360.0,566.1 1362.0,566.8 1364.0,567.6 1366.0,568.5 1368.0,569.3 1370.0,570.2 1372.0,571.1 1374.0,572.0 1376.0,572.9 1378.0,573.9 1380.0,574.9 1382.0,575.9 1384.0,576.9 1386.0,578.0 1388.0,579.1 1390.0,580.3 1392.0,581.5 1394.0,582.7 1396.0,584.0 1398.0,585.4 1400.0,586.7 1402.0,588.2 1404.0,589.7 1406.0,591.3 1408.0,593.0 1410.0,594.7 1412.0,596.5 1414.0,598.4 1416.0,600.3 1418.0,602.4 1420.0,604.5 1422.0,606.7 1424.0,609.0 1426.0,611.4 1428.0,613.8 1430.0,616.4 1432.0,619.0 1434.0,621.6 1436.0,624.3 1438.0,627.1 1440.0,629.9 1442.0,632.7 1444.0,635.6 1446.0,638.5 1448.0,641.5 1450.0,644.4 1452.0,647.3 1454.0,650.2 1456.0,653.2 1458.0,656.0 1460.0,658.9 1462.0,661.7 1464.0,664.5 1466.0,667.2 1468.0,669.9 1470.0,672.6 1472.0,675.1 1474.0,677.6 1476.0,680.1 1478.0,682.4 1480.0,684.8 1482.0,687.0 1484.0,689.2 1486.0,691.3 1488.0,693.3 1490.0,695.2 1492.0,697.1 1494.0,699.0 1496.0,700.7 1498.0,702.4 1500.0,704.0 1502.0,705.6 1504.0,707.1 1506.0,708.5 1508.0,709.9 1510.0,711.3 1512.0,712.5 1514.0,713.8 1516.0,714.9 1518.0,716.1 1520.0,717.1 1522.0,718.2 1524.0,719.1 1526.0,720.1 1528.0,721.0 1530.0,721.9 1532.0,722.7 1534.0,723.5 1536.0,724.2 1538.0,724.9 1540.0,725.6 1542.0,726.3 1544.0,726.9 1546.0,727.5 1548.0,728.0 1550.0,728.6 1552.0,729.1 1554.0,729.5 1556.0,730.0 1558.0,730.4 1560.0,730.8 1562.0,731.2 1564.0,731.6 1566.0,731.9 1568.0,732.2 1570.0,732.5 1572.0,732.8 1574.0,733.1 1576.0,733.4 1578.0,733.6 1580.0,733.8 1582.0,734.0 1584.0,734.2 1586.0,734.4 1588.0,734.6 1590.0,734.7 1592.0,734.9 1594.0,735.0 1596.0,735.2 1598.0,735.3 1600.0,735.4 1602.0,735.5 1604.0,735.6 1606.0,735.7 1608.0,735.8 1610.0,735.9 1612.0,735.9 1614.0,736.0 1616.0,736.1 1618.0,736.1 1620.0,736.2 1622.0,736.2 1624.0,736.3 1626.0,736.3 1628.0,736.4 L1628.0,736.8" fill="none" stroke="#ef8636" stroke-width="2.6" stroke-linejoin="round"/>
<path d="M962.0,736.8 L962.0,735.6 964.0,735.5 966.0,735.4 968.0,735.3 970.0,735.2 972.0,735.0 974.0,734.9 976.0,734.7 978.0,734.6 980.0,734.4 982.0,734.2 984.0,734.0 986.0,733.8 988.0,733.6 990.0,733.3 992.0,733.1 994.0,732.8 996.0,732.5 998.0,732.2 1000.0,731.9 1002.0,731.5 1004.0,731.1 1006.0,730.7 1008.0,730.3 1010.0,729.9 1012.0,729.4 1014.0,728.9 1016.0,728.4 1018.0,727.8 1020.0,727.2 1022.0,726.6 1024.0,725.9 1026.0,725.2 1028.0,724.5 1030.0,723.7 1032.0,722.9 1034.0,722.1 1036.0,721.2 1038.0,720.2 1040.0,719.2 1042.0,718.2 1044.0,717.1 1046.0,715.9 1048.0,714.7 1050.0,713.5 1052.0,712.2 1054.0,710.8 1056.0,709.4 1058.0,707.9 1060.0,706.3 1062.0,704.7 1064.0,703.0 1066.0,701.2 1068.0,699.4 1070.0,697.5 1072.0,695.5 1074.0,693.4 1076.0,691.3 1078.0,689.1 1080.0,686.8 1082.0,684.4 1084.0,681.9 1086.0,679.4 1088.0,676.7 1090.0,674.0 1092.0,671.2 1094.0,668.2 1096.0,665.2 1098.0,662.1 1100.0,658.9 1102.0,655.6 1104.0,652.1 1106.0,648.6 1108.0,644.9 1110.0,641.2 1112.0,637.3 1114.0,633.3 1116.0,629.2 1118.0,624.9 1120.0,620.5 1122.0,616.0 1124.0,611.3 1126.0,606.5 1128.0,601.5 1130.0,596.5 1132.0,591.2 1134.0,585.8 1136.0,580.3 1138.0,574.7 1140.0,568.9 1142.0,563.0 1144.0,557.0 1146.0,550.8 1148.0,544.6 1150.0,538.3 1152.0,531.9 1154.0,525.5 1156.0,519.0 1158.0,512.6 1160.0,506.1 1162.0,499.7 1164.0,493.3 1166.0,487.0 1168.0,480.8 1170.0,474.7 1172.0,468.8 1174.0,463.0 1176.0,457.4 1178.0,451.9 1180.0,446.7 1182.0,441.7 1184.0,436.8 1186.0,432.3 1188.0,427.9 1190.0,423.7 1192.0,419.8 1194.0,416.1 1196.0,412.6 1198.0,409.2 1200.0,406.1 1202.0,403.1 1204.0,400.2 1206.0,397.5 1208.0,395.0 1210.0,392.5 1212.0,390.1 1214.0,387.7 1216.0,385.5 1218.0,383.2 1220.0,381.1 1222.0,378.9 1224.0,376.7 1226.0,374.5 1228.0,372.3 1230.0,370.1 1232.0,367.9 1234.0,365.7 1236.0,363.4 1238.0,361.1 1240.0,358.8 1242.0,356.4 1244.0,354.0 1246.0,351.6 1248.0,349.1 1250.0,346.6 1252.0,344.1 1254.0,341.5 1256.0,338.9 1258.0,336.3 1260.0,333.7 1262.0,331.0 1264.0,328.4 1266.0,325.7 1268.0,323.0 1270.0,320.4 1272.0,317.7 1274.0,315.1 1276.0,312.4 1278.0,309.8 1280.0,307.3 1282.0,304.7 1284.0,302.3 1286.0,299.9 1288.0,297.6 1290.0,295.4 1292.0,293.3 1294.0,291.3 1296.0,289.4 1298.0,287.7 1300.0,286.2 1302.0,284.8 1304.0,283.7 1306.0,282.7 1308.0,282.0 1310.0,281.5 1312.0,281.3 1314.0,281.3 1316.0,281.6 1318.0,282.2 1320.0,283.1 1322.0,284.3 1324.0,285.8 1326.0,287.7 1328.0,289.8 1330.0,292.4 1332.0,295.2 1334.0,298.4 1336.0,301.9 1338.0,305.7 1340.0,309.9 1342.0,314.4 1344.0,319.1 1346.0,324.2 1348.0,329.6 1350.0,335.2 1352.0,341.1 1354.0,347.3 1356.0,353.6 1358.0,360.2 1360.0,366.9 1362.0,373.8 1364.0,380.9 1366.0,388.1 1368.0,395.3 1370.0,402.7 1372.0,410.1 1374.0,417.5 1376.0,425.0 1378.0,432.5 1380.0,439.9 1382.0,447.2 1384.0,454.6 1386.0,461.8 1388.0,468.9 1390.0,475.9 1392.0,482.8 1394.0,489.5 1396.0,496.1 1398.0,502.5 1400.0,508.8 1402.0,514.8 1404.0,520.7 1406.0,526.4 1408.0,531.9 1410.0,537.2 1412.0,542.3 1414.0,547.2 1416.0,551.9 1418.0,556.4 1420.0,560.8 1422.0,564.9 1424.0,568.9 1426.0,572.7 1428.0,576.3 1430.0,579.8 1432.0,583.1 1434.0,586.3 1436.0,589.3 1438.0,592.2 1440.0,595.0 1442.0,597.6 1444.0,600.2 1446.0,602.6 1448.0,604.9 1450.0,607.2 1452.0,609.4 1454.0,611.5 1456.0,613.5 1458.0,615.4 1460.0,617.3 1462.0,619.1 1464.0,620.9 1466.0,622.6 1468.0,624.3 1470.0,625.9 1472.0,627.4 1474.0,629.0 1476.0,630.4 1478.0,631.9 1480.0,633.2 1482.0,634.6 1484.0,635.9 1486.0,637.1 1488.0,638.4 1490.0,639.5 1492.0,640.7 1494.0,641.8 1496.0,642.9 1498.0,644.0 1500.0,645.0 1502.0,646.1 1504.0,647.1 1506.0,648.1 1508.0,649.1 1510.0,650.1 1512.0,651.0 1514.0,652.0 1516.0,653.1 1518.0,654.1 1520.0,655.1 1522.0,656.2 1524.0,657.3 1526.0,658.5 1528.0,659.7 1530.0,660.9 1532.0,662.2 1534.0,663.6 1536.0,665.0 1538.0,666.4 1540.0,667.9 1542.0,669.5 1544.0,671.1 1546.0,672.8 1548.0,674.5 1550.0,676.3 1552.0,678.2 1554.0,680.0 1556.0,682.0 1558.0,683.9 1560.0,685.9 1562.0,687.9 1564.0,689.9 1566.0,691.9 1568.0,693.9 1570.0,695.9 1572.0,697.9 1574.0,699.9 1576.0,701.9 1578.0,703.8 1580.0,705.7 1582.0,707.6 1584.0,709.4 1586.0,711.1 1588.0,712.8 1590.0,714.4 1592.0,716.0 1594.0,717.5 1596.0,718.9 1598.0,720.3 1600.0,721.6 1602.0,722.8 1604.0,724.0 1606.0,725.1 1608.0,726.1 1610.0,727.0 1612.0,727.9 1614.0,728.7 1616.0,729.5 1618.0,730.2 1620.0,730.9 1622.0,731.5 1624.0,732.0 1626.0,732.5 1628.0,733.0 1630.0,733.4 1632.0,733.7 1634.0,734.1 1636.0,734.4 1638.0,734.7 1640.0,734.9 1642.0,735.1 1644.0,735.3 1646.0,735.5 1648.0,735.7 1650.0,735.8 1652.0,735.9 1654.0,736.0 1656.0,736.1 1658.0,736.2 1660.0,736.3 1662.0,736.4 1664.0,736.4 1666.0,736.5 1668.0,736.5 1670.0,736.5 L1670.0,736.8 Z" fill="#2b73ab" fill-opacity="0.25" stroke="none"/><path d="M962.0,736.8 L962.0,735.6 964.0,735.5 966.0,735.4 968.0,735.3 970.0,735.2 972.0,735.0 974.0,734.9 976.0,734.7 978.0,734.6 980.0,734.4 982.0,734.2 984.0,734.0 986.0,733.8 988.0,733.6 990.0,733.3 992.0,733.1 994.0,732.8 996.0,732.5 998.0,732.2 1000.0,731.9 1002.0,731.5 1004.0,731.1 1006.0,730.7 1008.0,730.3 1010.0,729.9 1012.0,729.4 1014.0,728.9 1016.0,728.4 1018.0,727.8 1020.0,727.2 1022.0,726.6 1024.0,725.9 1026.0,725.2 1028.0,724.5 1030.0,723.7 1032.0,722.9 1034.0,722.1 1036.0,721.2 1038.0,720.2 1040.0,719.2 1042.0,718.2 1044.0,717.1 1046.0,715.9 1048.0,714.7 1050.0,713.5 1052.0,712.2 1054.0,710.8 1056.0,709.4 1058.0,707.9 1060.0,706.3 1062.0,704.7 1064.0,703.0 1066.0,701.2 1068.0,699.4 1070.0,697.5 1072.0,695.5 1074.0,693.4 1076.0,691.3 1078.0,689.1 1080.0,686.8 1082.0,684.4 1084.0,681.9 1086.0,679.4 1088.0,676.7 1090.0,674.0 1092.0,671.2 1094.0,668.2 1096.0,665.2 1098.0,662.1 1100.0,658.9 1102.0,655.6 1104.0,652.1 1106.0,648.6 1108.0,644.9 1110.0,641.2 1112.0,637.3 1114.0,633.3 1116.0,629.2 1118.0,624.9 1120.0,620.5 1122.0,616.0 1124.0,611.3 1126.0,606.5 1128.0,601.5 1130.0,596.5 1132.0,591.2 1134.0,585.8 1136.0,580.3 1138.0,574.7 1140.0,568.9 1142.0,563.0 1144.0,557.0 1146.0,550.8 1148.0,544.6 1150.0,538.3 1152.0,531.9 1154.0,525.5 1156.0,519.0 1158.0,512.6 1160.0,506.1 1162.0,499.7 1164.0,493.3 1166.0,487.0 1168.0,480.8 1170.0,474.7 1172.0,468.8 1174.0,463.0 1176.0,457.4 1178.0,451.9 1180.0,446.7 1182.0,441.7 1184.0,436.8 1186.0,432.3 1188.0,427.9 1190.0,423.7 1192.0,419.8 1194.0,416.1 1196.0,412.6 1198.0,409.2 1200.0,406.1 1202.0,403.1 1204.0,400.2 1206.0,397.5 1208.0,395.0 1210.0,392.5 1212.0,390.1 1214.0,387.7 1216.0,385.5 1218.0,383.2 1220.0,381.1 1222.0,378.9 1224.0,376.7 1226.0,374.5 1228.0,372.3 1230.0,370.1 1232.0,367.9 1234.0,365.7 1236.0,363.4 1238.0,361.1 1240.0,358.8 1242.0,356.4 1244.0,354.0 1246.0,351.6 1248.0,349.1 1250.0,346.6 1252.0,344.1 1254.0,341.5 1256.0,338.9 1258.0,336.3 1260.0,333.7 1262.0,331.0 1264.0,328.4 1266.0,325.7 1268.0,323.0 1270.0,320.4 1272.0,317.7 1274.0,315.1 1276.0,312.4 1278.0,309.8 1280.0,307.3 1282.0,304.7 1284.0,302.3 1286.0,299.9 1288.0,297.6 1290.0,295.4 1292.0,293.3 1294.0,291.3 1296.0,289.4 1298.0,287.7 1300.0,286.2 1302.0,284.8 1304.0,283.7 1306.0,282.7 1308.0,282.0 1310.0,281.5 1312.0,281.3 1314.0,281.3 1316.0,281.6 1318.0,282.2 1320.0,283.1 1322.0,284.3 1324.0,285.8 1326.0,287.7 1328.0,289.8 1330.0,292.4 1332.0,295.2 1334.0,298.4 1336.0,301.9 1338.0,305.7 1340.0,309.9 1342.0,314.4 1344.0,319.1 1346.0,324.2 1348.0,329.6 1350.0,335.2 1352.0,341.1 1354.0,347.3 1356.0,353.6 1358.0,360.2 1360.0,366.9 1362.0,373.8 1364.0,380.9 1366.0,388.1 1368.0,395.3 1370.0,402.7 1372.0,410.1 1374.0,417.5 1376.0,425.0 1378.0,432.5 1380.0,439.9 1382.0,447.2 1384.0,454.6 1386.0,461.8 1388.0,468.9 1390.0,475.9 1392.0,482.8 1394.0,489.5 1396.0,496.1 1398.0,502.5 1400.0,508.8 1402.0,514.8 1404.0,520.7 1406.0,526.4 1408.0,531.9 1410.0,537.2 1412.0,542.3 1414.0,547.2 1416.0,551.9 1418.0,556.4 1420.0,560.8 1422.0,564.9 1424.0,568.9 1426.0,572.7 1428.0,576.3 1430.0,579.8 1432.0,583.1 1434.0,586.3 1436.0,589.3 1438.0,592.2 1440.0,595.0 1442.0,597.6 1444.0,600.2 1446.0,602.6 1448.0,604.9 1450.0,607.2 1452.0,609.4 1454.0,611.5 1456.0,613.5 1458.0,615.4 1460.0,617.3 1462.0,619.1 1464.0,620.9 1466.0,622.6 1468.0,624.3 1470.0,625.9 1472.0,627.4 1474.0,629.0 1476.0,630.4 1478.0,631.9 1480.0,633.2 1482.0,634.6 1484.0,635.9 1486.0,637.1 1488.0,638.4 1490.0,639.5 1492.0,640.7 1494.0,641.8 1496.0,642.9 1498.0,644.0 1500.0,645.0 1502.0,646.1 1504.0,647.1 1506.0,648.1 1508.0,649.1 1510.0,650.1 1512.0,651.0 1514.0,652.0 1516.0,653.1 1518.0,654.1 1520.0,655.1 1522.0,656.2 1524.0,657.3 1526.0,658.5 1528.0,659.7 1530.0,660.9 1532.0,662.2 1534.0,663.6 1536.0,665.0 1538.0,666.4 1540.0,667.9 1542.0,669.5 1544.0,671.1 1546.0,672.8 1548.0,674.5 1550.0,676.3 1552.0,678.2 1554.0,680.0 1556.0,682.0 1558.0,683.9 1560.0,685.9 1562.0,687.9 1564.0,689.9 1566.0,691.9 1568.0,693.9 1570.0,695.9 1572.0,697.9 1574.0,699.9 1576.0,701.9 1578.0,703.8 1580.0,705.7 1582.0,707.6 1584.0,709.4 1586.0,711.1 1588.0,712.8 1590.0,714.4 1592.0,716.0 1594.0,717.5 1596.0,718.9 1598.0,720.3 1600.0,721.6 1602.0,722.8 1604.0,724.0 1606.0,725.1 1608.0,726.1 1610.0,727.0 1612.0,727.9 1614.0,728.7 1616.0,729.5 1618.0,730.2 1620.0,730.9 1622.0,731.5 1624.0,732.0 1626.0,732.5 1628.0,733.0 1630.0,733.4 1632.0,733.7 1634.0,734.1 1636.0,734.4 1638.0,734.7 1640.0,734.9 1642.0,735.1 1644.0,735.3 1646.0,735.5 1648.0,735.7 1650.0,735.8 1652.0,735.9 1654.0,736.0 1656.0,736.1 1658.0,736.2 1660.0,736.3 1662.0,736.4 1664.0,736.4 1666.0,736.5 1668.0,736.5 1670.0,736.5 L1670.0,736.8" fill="none" stroke="#3b75af" stroke-width="2.6" stroke-linejoin="round"/>
<path d="M707.0,256.8 V737.9 M705.9,736.8 H1728.8" stroke="#000" stroke-width="2.2" fill="none"/>
<text x="755.0" y="779.6" text-anchor="middle">12</text>
<text x="926.0" y="779.6" text-anchor="middle">14</text>
<text x="1097.0" y="779.6" text-anchor="middle">16</text>
<text x="1268.0" y="779.6" text-anchor="middle">18</text>
<text x="1439.0" y="779.6" text-anchor="middle">20</text>
<text x="1610.0" y="779.6" text-anchor="middle">22</text>
<text x="687.3" y="747.8" text-anchor="end">0.00</text>
<text x="687.3" y="683.8" text-anchor="end">0.02</text>
<text x="687.3" y="619.8" text-anchor="end">0.04</text>
<text x="687.3" y="555.8" text-anchor="end">0.06</text>
<text x="687.3" y="491.8" text-anchor="end">0.08</text>
<text x="687.3" y="427.8" text-anchor="end">0.10</text>
<text x="687.3" y="363.8" text-anchor="end">0.12</text>
<text x="687.3" y="299.8" text-anchor="end">0.14</text>
<path d="M755.0,736.8 v9.7 M926.0,736.8 v9.7 M1097.0,736.8 v9.7 M1268.0,736.8 v9.7 M1439.0,736.8 v9.7 M1610.0,736.8 v9.7 M707.0,736.8 h-9.7 M707.0,672.8 h-9.7 M707.0,608.8 h-9.7 M707.0,544.8 h-9.7 M707.0,480.8 h-9.7 M707.0,416.8 h-9.7 M707.0,352.8 h-9.7 M707.0,288.8 h-9.7" stroke="#000" stroke-width="2.2" fill="none"/>
<text x="1217.9" y="817.2" text-anchor="middle">bill_depth_mm</text>
<text transform="translate(610.4,500.7) rotate(-90)" text-anchor="middle">Density</text>
<text x="1627.1" y="486.1" text-anchor="middle">species</text>
<rect x="1521.5" y="509.7" width="56.3" height="19.8" fill="#2b73ab" fill-opacity="0.25" stroke="#3b75af" stroke-width="2.78"/>
<text x="1599.3" y="528.6">Adelie</text>
<rect x="1521.5" y="551.6" width="56.3" height="19.8" fill="#eb8323" fill-opacity="0.25" stroke="#ef8636" stroke-width="2.78"/>
<text x="1599.3" y="570.5">Chinstrap</text>
<rect x="1521.5" y="593.5" width="56.3" height="19.8" fill="#3f9737" fill-opacity="0.25" stroke="#519e3e" stroke-width="2.78"/>
<text x="1599.3" y="612.4">Gentoo</text></svg>
<svg style="position:absolute;left:523px;top:1014px" width="1268" height="692" viewBox="523 1014 1268 692"><path d="M998.0,1555.6 L998.0,1555.0 1000.0,1554.9 1002.0,1554.8 1004.0,1554.7 1006.0,1554.6 1008.0,1554.5 1010.0,1554.3 1012.0,1554.1 1014.0,1554.0 1016.0,1553.8 1018.0,1553.6 1020.0,1553.3 1022.0,1553.0 1024.0,1552.7 1026.0,1552.4 1028.0,1552.1 1030.0,1551.7 1032.0,1551.2 1034.0,1550.8 1036.0,1550.3 1038.0,1549.7 1040.0,1549.1 1042.0,1548.4 1044.0,1547.7 1046.0,1546.9 1048.0,1546.0 1050.0,1545.1 1052.0,1544.1 1054.0,1543.0 1056.0,1541.9 1058.0,1540.6 1060.0,1539.3 1062.0,1537.8 1064.0,1536.2 1066.0,1534.6 1068.0,1532.8 1070.0,1530.9 1072.0,1528.9 1074.0,1526.7 1076.0,1524.4 1078.0,1521.9 1080.0,1519.4 1082.0,1516.6 1084.0,1513.8 1086.0,1510.7 1088.0,1507.6 1090.0,1504.3 1092.0,1500.8 1094.0,1497.2 1096.0,1493.4 1098.0,1489.5 1100.0,1485.5 1102.0,1481.4 1104.0,1477.1 1106.0,1472.7 1108.0,1468.2 1110.0,1463.6 1112.0,1459.0 1114.0,1454.2 1116.0,1449.4 1118.0,1444.5 1120.0,1439.5 1122.0,1434.5 1124.0,1429.4 1126.0,1424.3 1128.0,1419.2 1130.0,1414.0 1132.0,1408.7 1134.0,1403.5 1136.0,1398.2 1138.0,1392.8 1140.0,1387.5 1142.0,1382.1 1144.0,1376.6 1146.0,1371.1 1148.0,1365.6 1150.0,1360.0 1152.0,1354.4 1154.0,1348.7 1156.0,1343.0 1158.0,1337.2 1160.0,1331.4 1162.0,1325.6 1164.0,1319.8 1166.0,1313.9 1168.0,1308.0 1170.0,1302.2 1172.0,1296.3 1174.0,1290.5 1176.0,1284.8 1178.0,1279.1 1180.0,1273.5 1182.0,1268.0 1184.0,1262.6 1186.0,1257.4 1188.0,1252.4 1190.0,1247.5 1192.0,1242.9 1194.0,1238.5 1196.0,1234.3 1198.0,1230.4 1200.0,1226.8 1202.0,1223.5 1204.0,1220.5 1206.0,1217.9 1208.0,1215.6 1210.0,1213.6 1212.0,1211.9 1214.0,1210.6 1216.0,1209.6 1218.0,1208.9 1220.0,1208.6 1222.0,1208.5 1224.0,1208.7 1226.0,1209.2 1228.0,1209.9 1230.0,1210.9 1232.0,1212.0 1234.0,1213.3 1236.0,1214.7 1238.0,1216.3 1240.0,1217.9 1242.0,1219.6 1244.0,1221.3 1246.0,1223.0 1248.0,1224.6 1250.0,1226.3 1252.0,1227.9 1254.0,1229.4 1256.0,1230.8 1258.0,1232.1 1260.0,1233.3 1262.0,1234.5 1264.0,1235.5 1266.0,1236.4 1268.0,1237.2 1270.0,1237.9 1272.0,1238.6 1274.0,1239.1 1276.0,1239.7 1278.0,1240.2 1280.0,1240.7 1282.0,1241.2 1284.0,1241.7 1286.0,1242.3 1288.0,1243.0 1290.0,1243.8 1292.0,1244.7 1294.0,1245.8 1296.0,1247.0 1298.0,1248.4 1300.0,1250.0 1302.0,1251.8 1304.0,1253.8 1306.0,1256.1 1308.0,1258.7 1310.0,1261.4 1312.0,1264.5 1314.0,1267.8 1316.0,1271.3 1318.0,1275.1 1320.0,1279.1 1322.0,1283.3 1324.0,1287.7 1326.0,1292.3 1328.0,1297.0 1330.0,1301.9 1332.0,1306.9 1334.0,1312.1 1336.0,1317.4 1338.0,1322.8 1340.0,1328.4 1342.0,1334.2 1344.0,1340.1 1346.0,1346.3 1348.0,1352.6 1350.0,1359.1 1352.0,1365.8 1354.0,1372.7 1356.0,1379.7 1358.0,1386.8 1360.0,1393.9 1362.0,1400.9 1364.0,1407.9 1366.0,1414.7 1368.0,1421.4 1370.0,1427.9 1372.0,1434.2 1374.0,1440.3 1376.0,1446.1 1378.0,1451.7 1380.0,1457.0 1382.0,1462.1 1384.0,1467.0 1386.0,1471.6 1388.0,1476.0 1390.0,1480.2 1392.0,1484.2 1394.0,1488.0 1396.0,1491.5 1398.0,1494.8 1400.0,1497.9 1402.0,1500.8 1404.0,1503.6 1406.0,1506.1 1408.0,1508.4 1410.0,1510.6 1412.0,1512.6 1414.0,1514.4 1416.0,1516.1 1418.0,1517.6 1420.0,1519.0 1422.0,1520.2 1424.0,1521.4 1426.0,1522.4 1428.0,1523.3 1430.0,1524.2 1432.0,1524.9 1434.0,1525.6 1436.0,1526.2 1438.0,1526.8 1440.0,1527.3 1442.0,1527.8 1444.0,1528.3 1446.0,1528.8 1448.0,1529.2 1450.0,1529.6 1452.0,1530.1 1454.0,1530.5 1456.0,1530.9 1458.0,1531.4 1460.0,1531.8 1462.0,1532.3 1464.0,1532.8 1466.0,1533.3 1468.0,1533.9 1470.0,1534.4 1472.0,1535.0 1474.0,1535.6 1476.0,1536.2 1478.0,1536.9 1480.0,1537.5 1482.0,1538.2 1484.0,1538.9 1486.0,1539.6 1488.0,1540.2 1490.0,1540.9 1492.0,1541.6 1494.0,1542.3 1496.0,1543.0 1498.0,1543.6 1500.0,1544.3 1502.0,1544.9 1504.0,1545.6 1506.0,1546.2 1508.0,1546.7 1510.0,1547.3 1512.0,1547.8 1514.0,1548.3 1516.0,1548.8 1518.0,1549.2 1520.0,1549.6 1522.0,1549.9 1524.0,1550.3 1526.0,1550.5 1528.0,1550.8 1530.0,1551.0 1532.0,1551.1 1534.0,1551.2 1536.0,1551.3 1538.0,1551.3 1540.0,1551.3 1542.0,1551.3 1544.0,1551.2 1546.0,1551.1 1548.0,1550.9 1550.0,1550.7 1552.0,1550.5 1554.0,1550.3 1556.0,1550.1 1558.0,1549.8 1560.0,1549.6 1562.0,1549.3 1564.0,1549.0 1566.0,1548.8 1568.0,1548.6 1570.0,1548.3 1572.0,1548.2 1574.0,1548.0 1576.0,1547.9 1578.0,1547.8 1580.0,1547.7 1582.0,1547.7 1584.0,1547.7 1586.0,1547.8 1588.0,1547.9 1590.0,1548.1 1592.0,1548.2 1594.0,1548.5 1596.0,1548.7 1598.0,1549.0 1600.0,1549.3 1602.0,1549.6 1604.0,1549.9 1606.0,1550.3 1608.0,1550.6 1610.0,1551.0 1612.0,1551.3 1614.0,1551.7 1616.0,1552.0 1618.0,1552.4 1620.0,1552.7 1622.0,1553.0 1624.0,1553.3 1626.0,1553.5 1628.0,1553.8 1630.0,1554.0 1632.0,1554.2 1634.0,1554.4 1636.0,1554.5 1638.0,1554.7 1640.0,1554.8 1642.0,1554.9 1644.0,1555.0 1646.0,1555.1 1648.0,1555.2 1650.0,1555.3 1652.0,1555.3 1654.0,1555.4 L1654.0,1555.6 Z" fill="#3f9737" fill-opacity="0.25" stroke="none"/><path d="M998.0,1555.6 L998.0,1555.0 1000.0,1554.9 1002.0,1554.8 1004.0,1554.7 1006.0,1554.6 1008.0,1554.5 1010.0,1554.3 1012.0,1554.1 1014.0,1554.0 1016.0,1553.8 1018.0,1553.6 1020.0,1553.3 1022.0,1553.0 1024.0,1552.7 1026.0,1552.4 1028.0,1552.1 1030.0,1551.7 1032.0,1551.2 1034.0,1550.8 1036.0,1550.3 1038.0,1549.7 1040.0,1549.1 1042.0,1548.4 1044.0,1547.7 1046.0,1546.9 1048.0,1546.0 1050.0,1545.1 1052.0,1544.1 1054.0,1543.0 1056.0,1541.9 1058.0,1540.6 1060.0,1539.3 1062.0,1537.8 1064.0,1536.2 1066.0,1534.6 1068.0,1532.8 1070.0,1530.9 1072.0,1528.9 1074.0,1526.7 1076.0,1524.4 1078.0,1521.9 1080.0,1519.4 1082.0,1516.6 1084.0,1513.8 1086.0,1510.7 1088.0,1507.6 1090.0,1504.3 1092.0,1500.8 1094.0,1497.2 1096.0,1493.4 1098.0,1489.5 1100.0,1485.5 1102.0,1481.4 1104.0,1477.1 1106.0,1472.7 1108.0,1468.2 1110.0,1463.6 1112.0,1459.0 1114.0,1454.2 1116.0,1449.4 1118.0,1444.5 1120.0,1439.5 1122.0,1434.5 1124.0,1429.4 1126.0,1424.3 1128.0,1419.2 1130.0,1414.0 1132.0,1408.7 1134.0,1403.5 1136.0,1398.2 1138.0,1392.8 1140.0,1387.5 1142.0,1382.1 1144.0,1376.6 1146.0,1371.1 1148.0,1365.6 1150.0,1360.0 1152.0,1354.4 1154.0,1348.7 1156.0,1343.0 1158.0,1337.2 1160.0,1331.4 1162.0,1325.6 1164.0,1319.8 1166.0,1313.9 1168.0,1308.0 1170.0,1302.2 1172.0,1296.3 1174.0,1290.5 1176.0,1284.8 1178.0,1279.1 1180.0,1273.5 1182.0,1268.0 1184.0,1262.6 1186.0,1257.4 1188.0,1252.4 1190.0,1247.5 1192.0,1242.9 1194.0,1238.5 1196.0,1234.3 1198.0,1230.4 1200.0,1226.8 1202.0,1223.5 1204.0,1220.5 1206.0,1217.9 1208.0,1215.6 1210.0,1213.6 1212.0,1211.9 1214.0,1210.6 1216.0,1209.6 1218.0,1208.9 1220.0,1208.6 1222.0,1208.5 1224.0,1208.7 1226.0,1209.2 1228.0,1209.9 1230.0,1210.9 1232.0,1212.0 1234.0,1213.3 1236.0,1214.7 1238.0,1216.3 1240.0,1217.9 1242.0,1219.6 1244.0,1221.3 1246.0,1223.0 1248.0,1224.6 1250.0,1226.3 1252.0,1227.9 1254.0,1229.4 1256.0,1230.8 1258.0,1232.1 1260.0,1233.3 1262.0,1234.5 1264.0,1235.5 1266.0,1236.4 1268.0,1237.2 1270.0,1237.9 1272.0,1238.6 1274.0,1239.1 1276.0,1239.7 1278.0,1240.2 1280.0,1240.7 1282.0,1241.2 1284.0,1241.7 1286.0,1242.3 1288.0,1243.0 1290.0,1243.8 1292.0,1244.7 1294.0,1245.8 1296.0,1247.0 1298.0,1248.4 1300.0,1250.0 1302.0,1251.8 1304.0,1253.8 1306.0,1256.1 1308.0,1258.7 1310.0,1261.4 1312.0,1264.5 1314.0,1267.8 1316.0,1271.3 1318.0,1275.1 1320.0,1279.1 1322.0,1283.3 1324.0,1287.7 1326.0,1292.3 1328.0,1297.0 1330.0,1301.9 1332.0,1306.9 1334.0,1312.1 1336.0,1317.4 1338.0,1322.8 1340.0,1328.4 1342.0,1334.2 1344.0,1340.1 1346.0,1346.3 1348.0,1352.6 1350.0,1359.1 1352.0,1365.8 1354.0,1372.7 1356.0,1379.7 1358.0,1386.8 1360.0,1393.9 1362.0,1400.9 1364.0,1407.9 1366.0,1414.7 1368.0,1421.4 1370.0,1427.9 1372.0,1434.2 1374.0,1440.3 1376.0,1446.1 1378.0,1451.7 1380.0,1457.0 1382.0,1462.1 1384.0,1467.0 1386.0,1471.6 1388.0,1476.0 1390.0,1480.2 1392.0,1484.2 1394.0,1488.0 1396.0,1491.5 1398.0,1494.8 1400.0,1497.9 1402.0,1500.8 1404.0,1503.6 1406.0,1506.1 1408.0,1508.4 1410.0,1510.6 1412.0,1512.6 1414.0,1514.4 1416.0,1516.1 1418.0,1517.6 1420.0,1519.0 1422.0,1520.2 1424.0,1521.4 1426.0,1522.4 1428.0,1523.3 1430.0,1524.2 1432.0,1524.9 1434.0,1525.6 1436.0,1526.2 1438.0,1526.8 1440.0,1527.3 1442.0,1527.8 1444.0,1528.3 1446.0,1528.8 1448.0,1529.2 1450.0,1529.6 1452.0,1530.1 1454.0,1530.5 1456.0,1530.9 1458.0,1531.4 1460.0,1531.8 1462.0,1532.3 1464.0,1532.8 1466.0,1533.3 1468.0,1533.9 1470.0,1534.4 1472.0,1535.0 1474.0,1535.6 1476.0,1536.2 1478.0,1536.9 1480.0,1537.5 1482.0,1538.2 1484.0,1538.9 1486.0,1539.6 1488.0,1540.2 1490.0,1540.9 1492.0,1541.6 1494.0,1542.3 1496.0,1543.0 1498.0,1543.6 1500.0,1544.3 1502.0,1544.9 1504.0,1545.6 1506.0,1546.2 1508.0,1546.7 1510.0,1547.3 1512.0,1547.8 1514.0,1548.3 1516.0,1548.8 1518.0,1549.2 1520.0,1549.6 1522.0,1549.9 1524.0,1550.3 1526.0,1550.5 1528.0,1550.8 1530.0,1551.0 1532.0,1551.1 1534.0,1551.2 1536.0,1551.3 1538.0,1551.3 1540.0,1551.3 1542.0,1551.3 1544.0,1551.2 1546.0,1551.1 1548.0,1550.9 1550.0,1550.7 1552.0,1550.5 1554.0,1550.3 1556.0,1550.1 1558.0,1549.8 1560.0,1549.6 1562.0,1549.3 1564.0,1549.0 1566.0,1548.8 1568.0,1548.6 1570.0,1548.3 1572.0,1548.2 1574.0,1548.0 1576.0,1547.9 1578.0,1547.8 1580.0,1547.7 1582.0,1547.7 1584.0,1547.7 1586.0,1547.8 1588.0,1547.9 1590.0,1548.1 1592.0,1548.2 1594.0,1548.5 1596.0,1548.7 1598.0,1549.0 1600.0,1549.3 1602.0,1549.6 1604.0,1549.9 1606.0,1550.3 1608.0,1550.6 1610.0,1551.0 1612.0,1551.3 1614.0,1551.7 1616.0,1552.0 1618.0,1552.4 1620.0,1552.7 1622.0,1553.0 1624.0,1553.3 1626.0,1553.5 1628.0,1553.8 1630.0,1554.0 1632.0,1554.2 1634.0,1554.4 1636.0,1554.5 1638.0,1554.7 1640.0,1554.8 1642.0,1554.9 1644.0,1555.0 1646.0,1555.1 1648.0,1555.2 1650.0,1555.3 1652.0,1555.3 1654.0,1555.4 L1654.0,1555.6" fill="none" stroke="#519e3e" stroke-width="2.6" stroke-linejoin="round"/>
<path d="M983.0,1555.6 L983.0,1555.3 985.0,1555.2 987.0,1555.2 989.0,1555.1 991.0,1555.0 993.0,1554.9 995.0,1554.9 997.0,1554.8 999.0,1554.6 1001.0,1554.5 1003.0,1554.4 1005.0,1554.2 1007.0,1554.1 1009.0,1553.9 1011.0,1553.7 1013.0,1553.4 1015.0,1553.2 1017.0,1552.9 1019.0,1552.6 1021.0,1552.3 1023.0,1552.0 1025.0,1551.6 1027.0,1551.2 1029.0,1550.8 1031.0,1550.3 1033.0,1549.8 1035.0,1549.3 1037.0,1548.8 1039.0,1548.2 1041.0,1547.6 1043.0,1547.0 1045.0,1546.3 1047.0,1545.6 1049.0,1544.8 1051.0,1544.1 1053.0,1543.3 1055.0,1542.5 1057.0,1541.6 1059.0,1540.8 1061.0,1539.9 1063.0,1539.0 1065.0,1538.0 1067.0,1537.1 1069.0,1536.2 1071.0,1535.2 1073.0,1534.2 1075.0,1533.3 1077.0,1532.3 1079.0,1531.3 1081.0,1530.3 1083.0,1529.4 1085.0,1528.4 1087.0,1527.5 1089.0,1526.6 1091.0,1525.7 1093.0,1524.8 1095.0,1523.9 1097.0,1523.0 1099.0,1522.1 1101.0,1521.3 1103.0,1520.5 1105.0,1519.7 1107.0,1518.9 1109.0,1518.1 1111.0,1517.3 1113.0,1516.5 1115.0,1515.7 1117.0,1514.9 1119.0,1514.0 1121.0,1513.2 1123.0,1512.3 1125.0,1511.4 1127.0,1510.4 1129.0,1509.4 1131.0,1508.4 1133.0,1507.3 1135.0,1506.1 1137.0,1504.9 1139.0,1503.6 1141.0,1502.2 1143.0,1500.7 1145.0,1499.1 1147.0,1497.5 1149.0,1495.7 1151.0,1493.9 1153.0,1491.9 1155.0,1489.8 1157.0,1487.6 1159.0,1485.3 1161.0,1482.8 1163.0,1480.2 1165.0,1477.4 1167.0,1474.6 1169.0,1471.7 1171.0,1468.8 1173.0,1465.9 1175.0,1463.1 1177.0,1460.5 1179.0,1457.9 1181.0,1455.5 1183.0,1453.1 1185.0,1450.7 1187.0,1448.3 1189.0,1446.0 1191.0,1443.6 1193.0,1441.2 1195.0,1438.9 1197.0,1436.7 1199.0,1434.5 1201.0,1432.5 1203.0,1430.6 1205.0,1428.8 1207.0,1427.1 1209.0,1425.6 1211.0,1424.3 1213.0,1423.1 1215.0,1422.0 1217.0,1421.1 1219.0,1420.4 1221.0,1419.8 1223.0,1419.3 1225.0,1419.0 1227.0,1418.8 1229.0,1418.7 1231.0,1418.7 1233.0,1418.9 1235.0,1419.1 1237.0,1419.3 1239.0,1419.7 1241.0,1420.0 1243.0,1420.4 1245.0,1420.8 1247.0,1421.3 1249.0,1421.6 1251.0,1422.0 1253.0,1422.3 1255.0,1422.5 1257.0,1422.7 1259.0,1422.8 1261.0,1422.8 1263.0,1422.7 1265.0,1422.4 1267.0,1422.0 1269.0,1421.5 1271.0,1420.9 1273.0,1420.1 1275.0,1419.2 1277.0,1418.2 1279.0,1417.0 1281.0,1415.6 1283.0,1414.1 1285.0,1412.5 1287.0,1410.8 1289.0,1409.0 1291.0,1407.0 1293.0,1405.0 1295.0,1402.9 1297.0,1400.7 1299.0,1398.5 1301.0,1396.2 1303.0,1393.9 1305.0,1391.6 1307.0,1389.3 1309.0,1387.0 1311.0,1384.8 1313.0,1382.6 1315.0,1380.5 1317.0,1378.5 1319.0,1376.6 1321.0,1374.8 1323.0,1373.2 1325.0,1371.7 1327.0,1370.3 1329.0,1369.2 1331.0,1368.2 1333.0,1367.4 1335.0,1366.9 1337.0,1366.5 1339.0,1366.4 1341.0,1366.5 1343.0,1366.8 1345.0,1367.4 1347.0,1368.1 1349.0,1369.2 1351.0,1370.4 1353.0,1371.9 1355.0,1373.6 1357.0,1375.5 1359.0,1377.6 1361.0,1380.0 1363.0,1382.5 1365.0,1385.3 1367.0,1388.2 1369.0,1391.3 1371.0,1394.5 1373.0,1397.9 1375.0,1401.4 1377.0,1405.0 1379.0,1408.7 1381.0,1412.5 1383.0,1416.4 1385.0,1420.3 1387.0,1424.3 1389.0,1428.3 1391.0,1432.3 1393.0,1436.3 1395.0,1440.3 1397.0,1444.2 1399.0,1448.1 1401.0,1452.0 1403.0,1455.8 1405.0,1459.5 1407.0,1463.2 1409.0,1466.7 1411.0,1470.2 1413.0,1473.7 1415.0,1477.0 1417.0,1480.3 1419.0,1483.5 1421.0,1486.6 1423.0,1489.6 1425.0,1492.6 1427.0,1495.5 1429.0,1498.4 1431.0,1501.2 1433.0,1503.9 1435.0,1506.5 1437.0,1509.1 1439.0,1511.5 1441.0,1513.9 1443.0,1516.2 1445.0,1518.4 1447.0,1520.4 1449.0,1522.4 1451.0,1524.3 1453.0,1526.0 1455.0,1527.7 1457.0,1529.2 1459.0,1530.6 1461.0,1531.9 1463.0,1533.1 1465.0,1534.2 1467.0,1535.3 1469.0,1536.2 1471.0,1537.0 1473.0,1537.8 1475.0,1538.5 1477.0,1539.1 1479.0,1539.7 1481.0,1540.2 1483.0,1540.7 1485.0,1541.2 1487.0,1541.6 1489.0,1542.0 1491.0,1542.3 1493.0,1542.6 1495.0,1542.9 1497.0,1543.2 1499.0,1543.5 1501.0,1543.8 1503.0,1544.0 1505.0,1544.3 1507.0,1544.5 1509.0,1544.8 1511.0,1545.0 1513.0,1545.2 1515.0,1545.5 1517.0,1545.7 1519.0,1545.9 1521.0,1546.2 1523.0,1546.4 1525.0,1546.6 1527.0,1546.9 1529.0,1547.1 1531.0,1547.4 1533.0,1547.6 1535.0,1547.9 1537.0,1548.1 1539.0,1548.4 1541.0,1548.6 1543.0,1548.9 1545.0,1549.1 1547.0,1549.4 1549.0,1549.6 1551.0,1549.8 1553.0,1550.1 1555.0,1550.3 1557.0,1550.6 1559.0,1550.8 1561.0,1551.0 1563.0,1551.2 1565.0,1551.5 1567.0,1551.7 1569.0,1551.9 1571.0,1552.1 1573.0,1552.3 1575.0,1552.5 1577.0,1552.6 1579.0,1552.8 1581.0,1553.0 1583.0,1553.2 1585.0,1553.3 1587.0,1553.5 1589.0,1553.6 1591.0,1553.7 1593.0,1553.9 1595.0,1554.0 1597.0,1554.1 1599.0,1554.2 1601.0,1554.3 1603.0,1554.4 1605.0,1554.5 1607.0,1554.6 1609.0,1554.7 1611.0,1554.8 1613.0,1554.8 1615.0,1554.9 1617.0,1555.0 1619.0,1555.0 1621.0,1555.1 1623.0,1555.1 1625.0,1555.2 1627.0,1555.2 1629.0,1555.2 1631.0,1555.3 1633.0,1555.3 1635.0,1555.3 1637.0,1555.4 L1637.0,1555.6 Z" fill="#eb8323" fill-opacity="0.25" stroke="none"/><path d="M983.0,1555.6 L983.0,1555.3 985.0,1555.2 987.0,1555.2 989.0,1555.1 991.0,1555.0 993.0,1554.9 995.0,1554.9 997.0,1554.8 999.0,1554.6 1001.0,1554.5 1003.0,1554.4 1005.0,1554.2 1007.0,1554.1 1009.0,1553.9 1011.0,1553.7 1013.0,1553.4 1015.0,1553.2 1017.0,1552.9 1019.0,1552.6 1021.0,1552.3 1023.0,1552.0 1025.0,1551.6 1027.0,1551.2 1029.0,1550.8 1031.0,1550.3 1033.0,1549.8 1035.0,1549.3 1037.0,1548.8 1039.0,1548.2 1041.0,1547.6 1043.0,1547.0 1045.0,1546.3 1047.0,1545.6 1049.0,1544.8 1051.0,1544.1 1053.0,1543.3 1055.0,1542.5 1057.0,1541.6 1059.0,1540.8 1061.0,1539.9 1063.0,1539.0 1065.0,1538.0 1067.0,1537.1 1069.0,1536.2 1071.0,1535.2 1073.0,1534.2 1075.0,1533.3 1077.0,1532.3 1079.0,1531.3 1081.0,1530.3 1083.0,1529.4 1085.0,1528.4 1087.0,1527.5 1089.0,1526.6 1091.0,1525.7 1093.0,1524.8 1095.0,1523.9 1097.0,1523.0 1099.0,1522.1 1101.0,1521.3 1103.0,1520.5 1105.0,1519.7 1107.0,1518.9 1109.0,1518.1 1111.0,1517.3 1113.0,1516.5 1115.0,1515.7 1117.0,1514.9 1119.0,1514.0 1121.0,1513.2 1123.0,1512.3 1125.0,1511.4 1127.0,1510.4 1129.0,1509.4 1131.0,1508.4 1133.0,1507.3 1135.0,1506.1 1137.0,1504.9 1139.0,1503.6 1141.0,1502.2 1143.0,1500.7 1145.0,1499.1 1147.0,1497.5 1149.0,1495.7 1151.0,1493.9 1153.0,1491.9 1155.0,1489.8 1157.0,1487.6 1159.0,1485.3 1161.0,1482.8 1163.0,1480.2 1165.0,1477.4 1167.0,1474.6 1169.0,1471.7 1171.0,1468.8 1173.0,1465.9 1175.0,1463.1 1177.0,1460.5 1179.0,1457.9 1181.0,1455.5 1183.0,1453.1 1185.0,1450.7 1187.0,1448.3 1189.0,1446.0 1191.0,1443.6 1193.0,1441.2 1195.0,1438.9 1197.0,1436.7 1199.0,1434.5 1201.0,1432.5 1203.0,1430.6 1205.0,1428.8 1207.0,1427.1 1209.0,1425.6 1211.0,1424.3 1213.0,1423.1 1215.0,1422.0 1217.0,1421.1 1219.0,1420.4 1221.0,1419.8 1223.0,1419.3 1225.0,1419.0 1227.0,1418.8 1229.0,1418.7 1231.0,1418.7 1233.0,1418.9 1235.0,1419.1 1237.0,1419.3 1239.0,1419.7 1241.0,1420.0 1243.0,1420.4 1245.0,1420.8 1247.0,1421.3 1249.0,1421.6 1251.0,1422.0 1253.0,1422.3 1255.0,1422.5 1257.0,1422.7 1259.0,1422.8 1261.0,1422.8 1263.0,1422.7 1265.0,1422.4 1267.0,1422.0 1269.0,1421.5 1271.0,1420.9 1273.0,1420.1 1275.0,1419.2 1277.0,1418.2 1279.0,1417.0 1281.0,1415.6 1283.0,1414.1 1285.0,1412.5 1287.0,1410.8 1289.0,1409.0 1291.0,1407.0 1293.0,1405.0 1295.0,1402.9 1297.0,1400.7 1299.0,1398.5 1301.0,1396.2 1303.0,1393.9 1305.0,1391.6 1307.0,1389.3 1309.0,1387.0 1311.0,1384.8 1313.0,1382.6 1315.0,1380.5 1317.0,1378.5 1319.0,1376.6 1321.0,1374.8 1323.0,1373.2 1325.0,1371.7 1327.0,1370.3 1329.0,1369.2 1331.0,1368.2 1333.0,1367.4 1335.0,1366.9 1337.0,1366.5 1339.0,1366.4 1341.0,1366.5 1343.0,1366.8 1345.0,1367.4 1347.0,1368.1 1349.0,1369.2 1351.0,1370.4 1353.0,1371.9 1355.0,1373.6 1357.0,1375.5 1359.0,1377.6 1361.0,1380.0 1363.0,1382.5 1365.0,1385.3 1367.0,1388.2 1369.0,1391.3 1371.0,1394.5 1373.0,1397.9 1375.0,1401.4 1377.0,1405.0 1379.0,1408.7 1381.0,1412.5 1383.0,1416.4 1385.0,1420.3 1387.0,1424.3 1389.0,1428.3 1391.0,1432.3 1393.0,1436.3 1395.0,1440.3 1397.0,1444.2 1399.0,1448.1 1401.0,1452.0 1403.0,1455.8 1405.0,1459.5 1407.0,1463.2 1409.0,1466.7 1411.0,1470.2 1413.0,1473.7 1415.0,1477.0 1417.0,1480.3 1419.0,1483.5 1421.0,1486.6 1423.0,1489.6 1425.0,1492.6 1427.0,1495.5 1429.0,1498.4 1431.0,1501.2 1433.0,1503.9 1435.0,1506.5 1437.0,1509.1 1439.0,1511.5 1441.0,1513.9 1443.0,1516.2 1445.0,1518.4 1447.0,1520.4 1449.0,1522.4 1451.0,1524.3 1453.0,1526.0 1455.0,1527.7 1457.0,1529.2 1459.0,1530.6 1461.0,1531.9 1463.0,1533.1 1465.0,1534.2 1467.0,1535.3 1469.0,1536.2 1471.0,1537.0 1473.0,1537.8 1475.0,1538.5 1477.0,1539.1 1479.0,1539.7 1481.0,1540.2 1483.0,1540.7 1485.0,1541.2 1487.0,1541.6 1489.0,1542.0 1491.0,1542.3 1493.0,1542.6 1495.0,1542.9 1497.0,1543.2 1499.0,1543.5 1501.0,1543.8 1503.0,1544.0 1505.0,1544.3 1507.0,1544.5 1509.0,1544.8 1511.0,1545.0 1513.0,1545.2 1515.0,1545.5 1517.0,1545.7 1519.0,1545.9 1521.0,1546.2 1523.0,1546.4 1525.0,1546.6 1527.0,1546.9 1529.0,1547.1 1531.0,1547.4 1533.0,1547.6 1535.0,1547.9 1537.0,1548.1 1539.0,1548.4 1541.0,1548.6 1543.0,1548.9 1545.0,1549.1 1547.0,1549.4 1549.0,1549.6 1551.0,1549.8 1553.0,1550.1 1555.0,1550.3 1557.0,1550.6 1559.0,1550.8 1561.0,1551.0 1563.0,1551.2 1565.0,1551.5 1567.0,1551.7 1569.0,1551.9 1571.0,1552.1 1573.0,1552.3 1575.0,1552.5 1577.0,1552.6 1579.0,1552.8 1581.0,1553.0 1583.0,1553.2 1585.0,1553.3 1587.0,1553.5 1589.0,1553.6 1591.0,1553.7 1593.0,1553.9 1595.0,1554.0 1597.0,1554.1 1599.0,1554.2 1601.0,1554.3 1603.0,1554.4 1605.0,1554.5 1607.0,1554.6 1609.0,1554.7 1611.0,1554.8 1613.0,1554.8 1615.0,1554.9 1617.0,1555.0 1619.0,1555.0 1621.0,1555.1 1623.0,1555.1 1625.0,1555.2 1627.0,1555.2 1629.0,1555.2 1631.0,1555.3 1633.0,1555.3 1635.0,1555.3 1637.0,1555.4 L1637.0,1555.6" fill="none" stroke="#ef8636" stroke-width="2.6" stroke-linejoin="round"/>
<path d="M768.0,1555.6 L768.0,1554.8 770.0,1554.7 772.0,1554.6 774.0,1554.4 776.0,1554.3 778.0,1554.1 780.0,1553.9 782.0,1553.6 784.0,1553.4 786.0,1553.1 788.0,1552.8 790.0,1552.4 792.0,1552.0 794.0,1551.6 796.0,1551.1 798.0,1550.6 800.0,1550.1 802.0,1549.4 804.0,1548.8 806.0,1548.1 808.0,1547.3 810.0,1546.5 812.0,1545.6 814.0,1544.6 816.0,1543.6 818.0,1542.5 820.0,1541.4 822.0,1540.1 824.0,1538.8 826.0,1537.4 828.0,1535.9 830.0,1534.3 832.0,1532.6 834.0,1530.9 836.0,1529.0 838.0,1527.0 840.0,1525.0 842.0,1522.8 844.0,1520.5 846.0,1518.1 848.0,1515.5 850.0,1512.8 852.0,1510.0 854.0,1507.0 856.0,1503.9 858.0,1500.6 860.0,1497.1 862.0,1493.5 864.0,1489.6 866.0,1485.6 868.0,1481.4 870.0,1476.9 872.0,1472.2 874.0,1467.4 876.0,1462.2 878.0,1456.9 880.0,1451.2 882.0,1445.4 884.0,1439.3 886.0,1432.9 888.0,1426.3 890.0,1419.4 892.0,1412.2 894.0,1404.9 896.0,1397.3 898.0,1389.5 900.0,1381.4 902.0,1373.2 904.0,1364.8 906.0,1356.2 908.0,1347.5 910.0,1338.7 912.0,1329.8 914.0,1320.8 916.0,1311.9 918.0,1302.9 920.0,1293.9 922.0,1285.0 924.0,1276.1 926.0,1267.4 928.0,1258.8 930.0,1250.4 932.0,1242.2 934.0,1234.1 936.0,1226.3 938.0,1218.8 940.0,1211.5 942.0,1204.5 944.0,1197.7 946.0,1191.2 948.0,1185.0 950.0,1179.0 952.0,1173.4 954.0,1168.0 956.0,1162.8 958.0,1157.9 960.0,1153.2 962.0,1148.8 964.0,1144.5 966.0,1140.5 968.0,1136.6 970.0,1133.0 972.0,1129.5 974.0,1126.2 976.0,1123.0 978.0,1120.1 980.0,1117.3 982.0,1114.7 984.0,1112.3 986.0,1110.1 988.0,1108.1 990.0,1106.3 992.0,1104.7 994.0,1103.3 996.0,1102.1 998.0,1101.1 1000.0,1100.3 1002.0,1099.8 1004.0,1099.4 1006.0,1099.2 1008.0,1099.2 1010.0,1099.4 1012.0,1099.6 1014.0,1100.1 1016.0,1100.6 1018.0,1101.2 1020.0,1101.8 1022.0,1102.6 1024.0,1103.4 1026.0,1104.2 1028.0,1105.0 1030.0,1105.9 1032.0,1106.8 1034.0,1107.8 1036.0,1108.8 1038.0,1109.8 1040.0,1110.9 1042.0,1112.1 1044.0,1113.5 1046.0,1114.9 1048.0,1116.5 1050.0,1118.2 1052.0,1120.2 1054.0,1122.4 1056.0,1124.8 1058.0,1127.5 1060.0,1130.5 1062.0,1133.8 1064.0,1137.4 1066.0,1141.3 1068.0,1145.6 1070.0,1150.3 1072.0,1155.3 1074.0,1160.6 1076.0,1166.3 1078.0,1172.3 1080.0,1178.7 1082.0,1185.4 1084.0,1192.4 1086.0,1199.7 1088.0,1207.3 1090.0,1215.2 1092.0,1223.3 1094.0,1231.6 1096.0,1240.1 1098.0,1248.8 1100.0,1257.6 1102.0,1266.6 1104.0,1275.6 1106.0,1284.7 1108.0,1293.9 1110.0,1303.1 1112.0,1312.3 1114.0,1321.4 1116.0,1330.5 1118.0,1339.6 1120.0,1348.5 1122.0,1357.3 1124.0,1366.0 1126.0,1374.6 1128.0,1383.0 1130.0,1391.2 1132.0,1399.2 1134.0,1407.0 1136.0,1414.5 1138.0,1421.9 1140.0,1428.9 1142.0,1435.8 1144.0,1442.3 1146.0,1448.6 1148.0,1454.6 1150.0,1460.3 1152.0,1465.7 1154.0,1470.8 1156.0,1475.6 1158.0,1480.1 1160.0,1484.3 1162.0,1488.2 1164.0,1491.8 1166.0,1495.2 1168.0,1498.2 1170.0,1501.0 1172.0,1503.4 1174.0,1505.7 1176.0,1507.7 1178.0,1509.4 1180.0,1511.0 1182.0,1512.4 1184.0,1513.6 1186.0,1514.6 1188.0,1515.5 1190.0,1516.3 1192.0,1517.1 1194.0,1517.8 1196.0,1518.4 1198.0,1519.0 1200.0,1519.7 1202.0,1520.3 1204.0,1521.0 1206.0,1521.7 1208.0,1522.5 1210.0,1523.4 1212.0,1524.3 1214.0,1525.3 1216.0,1526.4 1218.0,1527.6 1220.0,1528.8 1222.0,1530.0 1224.0,1531.4 1226.0,1532.7 1228.0,1534.1 1230.0,1535.5 1232.0,1536.9 1234.0,1538.3 1236.0,1539.7 1238.0,1541.0 1240.0,1542.3 1242.0,1543.5 1244.0,1544.7 1246.0,1545.9 1248.0,1546.9 1250.0,1547.9 1252.0,1548.8 1254.0,1549.6 1256.0,1550.4 1258.0,1551.1 1260.0,1551.7 1262.0,1552.3 1264.0,1552.7 1266.0,1553.2 1268.0,1553.5 1270.0,1553.9 1272.0,1554.2 1274.0,1554.4 1276.0,1554.6 1278.0,1554.8 1280.0,1554.9 1282.0,1555.1 1284.0,1555.2 1286.0,1555.2 1288.0,1555.3 1290.0,1555.4 L1290.0,1555.6 Z" fill="#2b73ab" fill-opacity="0.25" stroke="none"/><path d="M768.0,1555.6 L768.0,1554.8 770.0,1554.7 772.0,1554.6 774.0,1554.4 776.0,1554.3 778.0,1554.1 780.0,1553.9 782.0,1553.6 784.0,1553.4 786.0,1553.1 788.0,1552.8 790.0,1552.4 792.0,1552.0 794.0,1551.6 796.0,1551.1 798.0,1550.6 800.0,1550.1 802.0,1549.4 804.0,1548.8 806.0,1548.1 808.0,1547.3 810.0,1546.5 812.0,1545.6 814.0,1544.6 816.0,1543.6 818.0,1542.5 820.0,1541.4 822.0,1540.1 824.0,1538.8 826.0,1537.4 828.0,1535.9 830.0,1534.3 832.0,1532.6 834.0,1530.9 836.0,1529.0 838.0,1527.0 840.0,1525.0 842.0,1522.8 844.0,1520.5 846.0,1518.1 848.0,1515.5 850.0,1512.8 852.0,1510.0 854.0,1507.0 856.0,1503.9 858.0,1500.6 860.0,1497.1 862.0,1493.5 864.0,1489.6 866.0,1485.6 868.0,1481.4 870.0,1476.9 872.0,1472.2 874.0,1467.4 876.0,1462.2 878.0,1456.9 880.0,1451.2 882.0,1445.4 884.0,1439.3 886.0,1432.9 888.0,1426.3 890.0,1419.4 892.0,1412.2 894.0,1404.9 896.0,1397.3 898.0,1389.5 900.0,1381.4 902.0,1373.2 904.0,1364.8 906.0,1356.2 908.0,1347.5 910.0,1338.7 912.0,1329.8 914.0,1320.8 916.0,1311.9 918.0,1302.9 920.0,1293.9 922.0,1285.0 924.0,1276.1 926.0,1267.4 928.0,1258.8 930.0,1250.4 932.0,1242.2 934.0,1234.1 936.0,1226.3 938.0,1218.8 940.0,1211.5 942.0,1204.5 944.0,1197.7 946.0,1191.2 948.0,1185.0 950.0,1179.0 952.0,1173.4 954.0,1168.0 956.0,1162.8 958.0,1157.9 960.0,1153.2 962.0,1148.8 964.0,1144.5 966.0,1140.5 968.0,1136.6 970.0,1133.0 972.0,1129.5 974.0,1126.2 976.0,1123.0 978.0,1120.1 980.0,1117.3 982.0,1114.7 984.0,1112.3 986.0,1110.1 988.0,1108.1 990.0,1106.3 992.0,1104.7 994.0,1103.3 996.0,1102.1 998.0,1101.1 1000.0,1100.3 1002.0,1099.8 1004.0,1099.4 1006.0,1099.2 1008.0,1099.2 1010.0,1099.4 1012.0,1099.6 1014.0,1100.1 1016.0,1100.6 1018.0,1101.2 1020.0,1101.8 1022.0,1102.6 1024.0,1103.4 1026.0,1104.2 1028.0,1105.0 1030.0,1105.9 1032.0,1106.8 1034.0,1107.8 1036.0,1108.8 1038.0,1109.8 1040.0,1110.9 1042.0,1112.1 1044.0,1113.5 1046.0,1114.9 1048.0,1116.5 1050.0,1118.2 1052.0,1120.2 1054.0,1122.4 1056.0,1124.8 1058.0,1127.5 1060.0,1130.5 1062.0,1133.8 1064.0,1137.4 1066.0,1141.3 1068.0,1145.6 1070.0,1150.3 1072.0,1155.3 1074.0,1160.6 1076.0,1166.3 1078.0,1172.3 1080.0,1178.7 1082.0,1185.4 1084.0,1192.4 1086.0,1199.7 1088.0,1207.3 1090.0,1215.2 1092.0,1223.3 1094.0,1231.6 1096.0,1240.1 1098.0,1248.8 1100.0,1257.6 1102.0,1266.6 1104.0,1275.6 1106.0,1284.7 1108.0,1293.9 1110.0,1303.1 1112.0,1312.3 1114.0,1321.4 1116.0,1330.5 1118.0,1339.6 1120.0,1348.5 1122.0,1357.3 1124.0,1366.0 1126.0,1374.6 1128.0,1383.0 1130.0,1391.2 1132.0,1399.2 1134.0,1407.0 1136.0,1414.5 1138.0,1421.9 1140.0,1428.9 1142.0,1435.8 1144.0,1442.3 1146.0,1448.6 1148.0,1454.6 1150.0,1460.3 1152.0,1465.7 1154.0,1470.8 1156.0,1475.6 1158.0,1480.1 1160.0,1484.3 1162.0,1488.2 1164.0,1491.8 1166.0,1495.2 1168.0,1498.2 1170.0,1501.0 1172.0,1503.4 1174.0,1505.7 1176.0,1507.7 1178.0,1509.4 1180.0,1511.0 1182.0,1512.4 1184.0,1513.6 1186.0,1514.6 1188.0,1515.5 1190.0,1516.3 1192.0,1517.1 1194.0,1517.8 1196.0,1518.4 1198.0,1519.0 1200.0,1519.7 1202.0,1520.3 1204.0,1521.0 1206.0,1521.7 1208.0,1522.5 1210.0,1523.4 1212.0,1524.3 1214.0,1525.3 1216.0,1526.4 1218.0,1527.6 1220.0,1528.8 1222.0,1530.0 1224.0,1531.4 1226.0,1532.7 1228.0,1534.1 1230.0,1535.5 1232.0,1536.9 1234.0,1538.3 1236.0,1539.7 1238.0,1541.0 1240.0,1542.3 1242.0,1543.5 1244.0,1544.7 1246.0,1545.9 1248.0,1546.9 1250.0,1547.9 1252.0,1548.8 1254.0,1549.6 1256.0,1550.4 1258.0,1551.1 1260.0,1551.7 1262.0,1552.3 1264.0,1552.7 1266.0,1553.2 1268.0,1553.5 1270.0,1553.9 1272.0,1554.2 1274.0,1554.4 1276.0,1554.6 1278.0,1554.8 1280.0,1554.9 1282.0,1555.1 1284.0,1555.2 1286.0,1555.2 1288.0,1555.3 1290.0,1555.4 L1290.0,1555.6" fill="none" stroke="#3b75af" stroke-width="2.6" stroke-linejoin="round"/>
<path d="M707.0,1075.8 V1556.8999999999999 M705.9,1555.8 H1728.8" stroke="#000" stroke-width="2.2" fill="none"/>
<text x="775.5" y="1598.6" text-anchor="middle">30</text>
<text x="912.2" y="1598.6" text-anchor="middle">35</text>
<text x="1048.9" y="1598.6" text-anchor="middle">40</text>
<text x="1185.6" y="1598.6" text-anchor="middle">45</text>
<text x="1322.3" y="1598.6" text-anchor="middle">50</text>
<text x="1459.0" y="1598.6" text-anchor="middle">55</text>
<text x="1595.7" y="1598.6" text-anchor="middle">60</text>
<text x="687.3" y="1566.8" text-anchor="end">0.00</text>
<text x="687.3" y="1487.0" text-anchor="end">0.01</text>
<text x="687.3" y="1407.2" text-anchor="end">0.02</text>
<text x="687.3" y="1327.4" text-anchor="end">0.03</text>
<text x="687.3" y="1247.6" text-anchor="end">0.04</text>
<text x="687.3" y="1167.8" text-anchor="end">0.05</text>
<path d="M775.5,1555.8 v9.7 M912.2,1555.8 v9.7 M1048.9,1555.8 v9.7 M1185.6,1555.8 v9.7 M1322.3,1555.8 v9.7 M1459.0,1555.8 v9.7 M1595.7,1555.8 v9.7 M707.0,1555.8 h-9.7 M707.0,1476.0 h-9.7 M707.0,1396.2 h-9.7 M707.0,1316.4 h-9.7 M707.0,1236.6 h-9.7 M707.0,1156.8 h-9.7" stroke="#000" stroke-width="2.2" fill="none"/>
<text x="1217.9" y="1636.2" text-anchor="middle">bill_length_mm</text>
<text transform="translate(610.4,1319.7) rotate(-90)" text-anchor="middle">Density</text>
<text x="1627.1" y="1305.1" text-anchor="middle">species</text>
<rect x="1521.5" y="1328.7" width="56.3" height="19.8" fill="#2b73ab" fill-opacity="0.25" stroke="#3b75af" stroke-width="2.78"/>
<text x="1599.3" y="1347.6">Adelie</text>
<rect x="1521.5" y="1370.6" width="56.3" height="19.8" fill="#eb8323" fill-opacity="0.25" stroke="#ef8636" stroke-width="2.78"/>
<text x="1599.3" y="1389.5">Chinstrap</text>
<rect x="1521.5" y="1412.5" width="56.3" height="19.8" fill="#3f9737" fill-opacity="0.25" stroke="#519e3e" stroke-width="2.78"/>
<text x="1599.3" y="1431.4">Gentoo</text></svg>
<svg style="position:absolute;left:0;top:1714px" width="1816" height="20" viewBox="0 1714 1816 20"><path d="M0 1724 Q5 1732 20 1734 L0 1734 Z" fill="#cfcfcf"/><path d="M1794 1734 Q1810 1732 1816 1722 L1816 1734 Z" fill="#4f6b8c"/></svg>
</body></html>
